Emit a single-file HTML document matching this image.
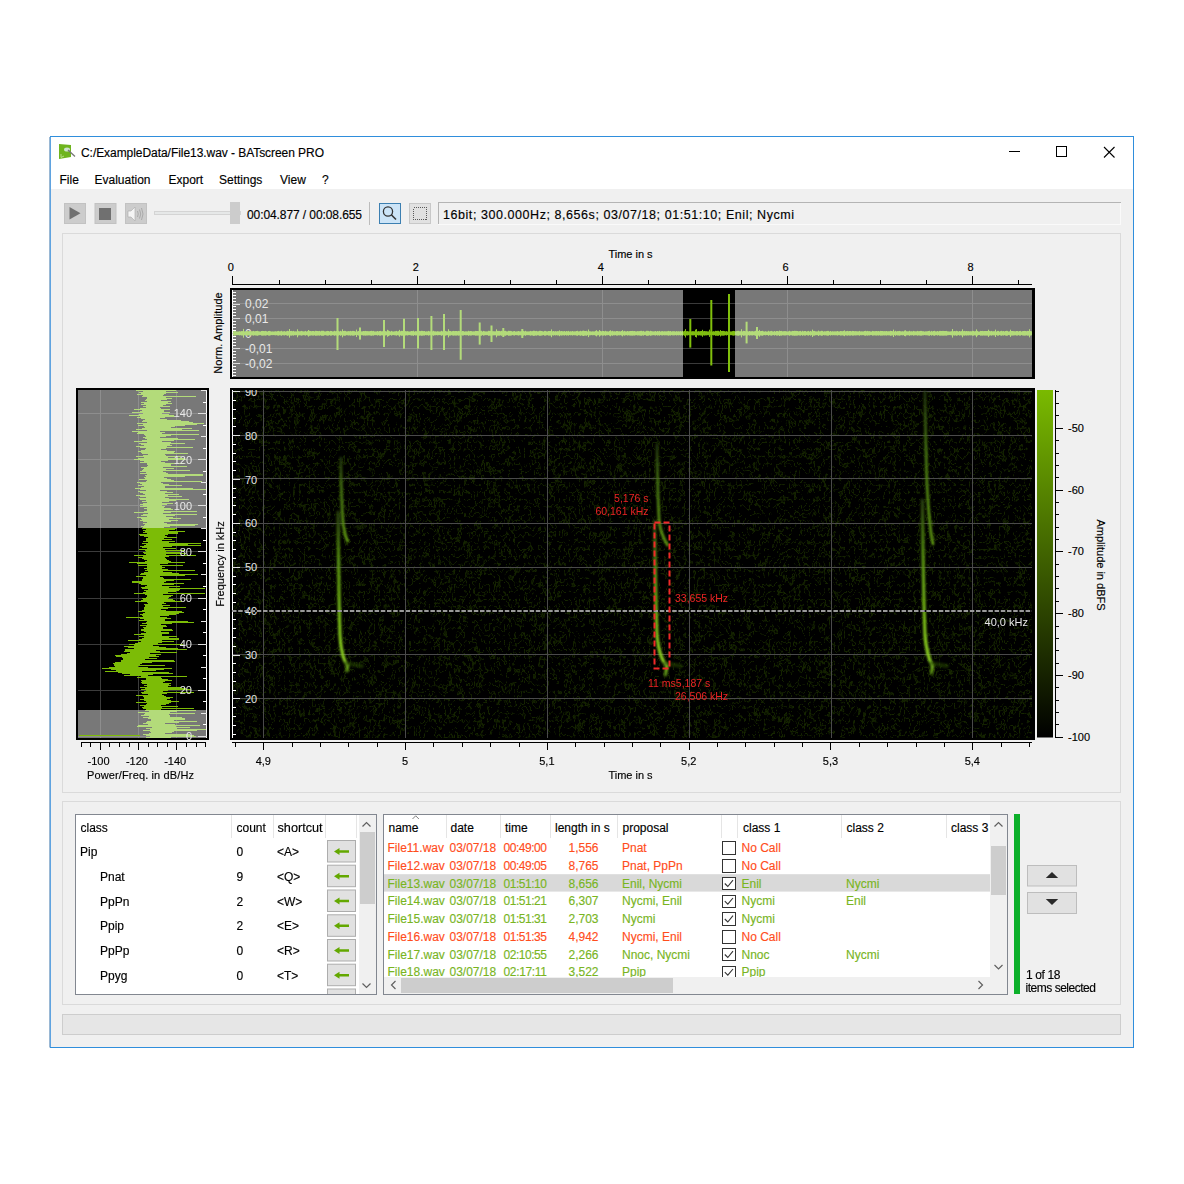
<!DOCTYPE html>
<html><head><meta charset="utf-8"><title>BATscreen PRO</title>
<style>html,body{margin:0;padding:0;background:#fff;width:1184px;height:1184px;overflow:hidden}svg{display:block}text{font-family:"Liberation Sans", sans-serif}</style>
</head><body><svg width="1184" height="1184" viewBox="0 0 1184 1184" font-family='"Liberation Sans", sans-serif'><defs>
<filter id="noise" x="0" y="0" width="100%" height="100%" color-interpolation-filters="sRGB">
<feTurbulence type="fractalNoise" baseFrequency="0.2 0.14" numOctaves="2" seed="5"/><feColorMatrix type="matrix" values="1 0 0 0 0  1 0 0 0 0  1 0 0 0 0  0 0 0 0 1"/>
<feComponentTransfer result="c"><feFuncR type="table" tableValues="0 0 0 0 0 0 0 0 0.09 0 0 0 0 0 0 0 0"/><feFuncG type="table" tableValues="0 0 0 0 0 0 0 0 0.155 0 0 0 0 0 0 0 0"/><feFuncB type="table" tableValues="0"/><feFuncA type="table" tableValues="1 1"/></feComponentTransfer>
<feTurbulence type="fractalNoise" baseFrequency="0.12" numOctaves="2" seed="11"/><feColorMatrix type="matrix" values="1 0 0 0 0  1 0 0 0 0  1 0 0 0 0  0 0 0 0 1"/>
<feComponentTransfer result="m"><feFuncR type="discrete" tableValues="0 0 0 0 1 1 1 1 1 1"/><feFuncG type="discrete" tableValues="0 0 0 0 1 1 1 1 1 1"/><feFuncB type="discrete" tableValues="0 0 0 0 1 1 1 1 1 1"/><feFuncA type="table" tableValues="1 1"/></feComponentTransfer>
<feComposite in="c" in2="m" operator="arithmetic" k1="1" k2="0" k3="0" k4="0"/>
</filter>
<filter id="soft" x="-50%" y="-10%" width="200%" height="120%"><feGaussianBlur stdDeviation="0.9"/></filter>
</defs><rect x="0" y="0" width="1184" height="1184" fill="#ffffff" />
<rect x="50" y="136" width="1084" height="912" fill="#2f8edc" />
<rect x="51" y="137" width="1082" height="910" fill="#f0f0f0" />
<line x1="49.5" y1="137" x2="49.5" y2="1047.5" stroke="#9ab8d4" stroke-width="1" />
<line x1="50.5" y1="137" x2="50.5" y2="1047" stroke="#5fa3e0" stroke-width="1" />
<rect x="51" y="137" width="1082" height="52" fill="#ffffff" />
<path d="M59 144 L71 145 L71 157 L59 159 Z" fill="#6fb41e"/>
<ellipse cx="67" cy="149.5" rx="3" ry="2" fill="#cfe3cf"/>
<line x1="68" y1="150" x2="75" y2="156.5" stroke="#777" stroke-width="1.3"/>
<path d="M61 154 L61 157.5 L64 156" stroke="#c8e6a0" stroke-width="0.8" fill="none"/>
<text x="81" y="157" font-size="12" fill="#000" stroke="#000" stroke-width="0.15" text-anchor="start" textLength="243">C:/ExampleData/File13.wav - BATscreen PRO</text>
<line x1="1009" y1="151.5" x2="1020" y2="151.5" stroke="#000" stroke-width="1" />
<rect x="1056.5" y="146.5" width="10" height="10" fill="none" stroke="#000" stroke-width="1" />
<line x1="1104" y1="147" x2="1114.5" y2="157.5" stroke="#000" stroke-width="1.1" />
<line x1="1114.5" y1="147" x2="1104" y2="157.5" stroke="#000" stroke-width="1.1" />
<text x="59.5" y="184" font-size="12" fill="#000" stroke="#000" stroke-width="0.15" text-anchor="start" >File</text>
<text x="94.5" y="184" font-size="12" fill="#000" stroke="#000" stroke-width="0.15" text-anchor="start" >Evaluation</text>
<text x="168.5" y="184" font-size="12" fill="#000" stroke="#000" stroke-width="0.15" text-anchor="start" >Export</text>
<text x="219" y="184" font-size="12" fill="#000" stroke="#000" stroke-width="0.15" text-anchor="start" >Settings</text>
<text x="280" y="184" font-size="12" fill="#000" stroke="#000" stroke-width="0.15" text-anchor="start" >View</text>
<text x="322" y="184" font-size="12" fill="#000" stroke="#000" stroke-width="0.15" text-anchor="start" >?</text>
<rect x="64.5" y="203.5" width="21" height="20" fill="#cccccc" stroke="#c2c2c2" stroke-width="1" />
<rect x="95.0" y="203.5" width="21" height="20" fill="#cccccc" stroke="#c2c2c2" stroke-width="1" />
<rect x="125.5" y="203.5" width="21" height="20" fill="#cccccc" stroke="#c2c2c2" stroke-width="1" />
<path d="M69.5 207 L80.5 213.2 L69.5 219.5 Z" fill="#707070"/>
<rect x="99" y="208" width="12" height="12" fill="#707070" />
<path d="M128 211 L131 211 L135 207 L135 221 L131 217 L128 217 Z" fill="#f4f4f4" stroke="#aaa" stroke-width="0.6"/>
<path d="M137.5 211 Q139 214 137.5 217 M139.5 209.5 Q142 214 139.5 218.5 M141.5 208 Q144.5 214 141.5 220" fill="none" stroke="#999" stroke-width="0.7"/>
<rect x="154.5" y="211.5" width="86" height="3" fill="#e6e8e8" stroke="#d4d4d4" stroke-width="1" />
<rect x="230" y="202" width="10" height="22" fill="#cccccc" />
<text x="247" y="219" font-size="12" fill="#000" stroke="#000" stroke-width="0.15" text-anchor="start" textLength="115">00:04.877 / 00:08.655</text>
<line x1="369.5" y1="202" x2="369.5" y2="225" stroke="#bcbcbc" stroke-width="1" />
<rect x="379.5" y="203.5" width="21" height="20" fill="#cce4f7" stroke="#3c7fb1" stroke-width="1" />
<circle cx="388" cy="211.5" r="4.6" fill="none" stroke="#333" stroke-width="1.3"/>
<line x1="391.3" y1="214.8" x2="396" y2="219.5" stroke="#333" stroke-width="1.6"/>
<rect x="409.5" y="203.5" width="21" height="20" fill="#e1e1e1" stroke="#c8c8c8" stroke-width="1" />
<rect x="413.5" y="207.5" width="13" height="12" fill="none" stroke="#5a5a5a" stroke-width="1" stroke-dasharray="1 1" shape-rendering="crispEdges"/>
<rect x="438" y="202" width="683" height="23" fill="#f0f0f0" />
<line x1="438" y1="202.5" x2="1121" y2="202.5" stroke="#b4b4b4" stroke-width="1" />
<line x1="438.5" y1="202" x2="438.5" y2="225" stroke="#b4b4b4" stroke-width="1" />
<line x1="438" y1="224.5" x2="1121" y2="224.5" stroke="#fafafa" stroke-width="1" />
<line x1="1120.5" y1="203" x2="1120.5" y2="225" stroke="#fafafa" stroke-width="1" />
<text x="443" y="219" font-size="12.5" fill="#000" stroke="#000" stroke-width="0.15" text-anchor="start" textLength="351">16bit; 300.000Hz; 8,656s; 03/07/18; 01:51:10; Enil; Nycmi</text>
<rect x="62.5" y="233.5" width="1058" height="559" fill="none" stroke="#dadada" stroke-width="1" />
<g shape-rendering="crispEdges">
<line x1="232" y1="284.5" x2="1032" y2="284.5" stroke="#000" stroke-width="1" />
<line x1="232.5" y1="276" x2="232.5" y2="285" stroke="#000" stroke-width="1" />
<line x1="279.5" y1="280" x2="279.5" y2="285" stroke="#000" stroke-width="1" />
<line x1="325.5" y1="280" x2="325.5" y2="285" stroke="#000" stroke-width="1" />
<line x1="371.5" y1="280" x2="371.5" y2="285" stroke="#000" stroke-width="1" />
<line x1="417.5" y1="276" x2="417.5" y2="285" stroke="#000" stroke-width="1" />
<line x1="464.5" y1="280" x2="464.5" y2="285" stroke="#000" stroke-width="1" />
<line x1="510.5" y1="280" x2="510.5" y2="285" stroke="#000" stroke-width="1" />
<line x1="556.5" y1="280" x2="556.5" y2="285" stroke="#000" stroke-width="1" />
<line x1="602.5" y1="276" x2="602.5" y2="285" stroke="#000" stroke-width="1" />
<line x1="648.5" y1="280" x2="648.5" y2="285" stroke="#000" stroke-width="1" />
<line x1="695.5" y1="280" x2="695.5" y2="285" stroke="#000" stroke-width="1" />
<line x1="741.5" y1="280" x2="741.5" y2="285" stroke="#000" stroke-width="1" />
<line x1="787.5" y1="276" x2="787.5" y2="285" stroke="#000" stroke-width="1" />
<line x1="833.5" y1="280" x2="833.5" y2="285" stroke="#000" stroke-width="1" />
<line x1="880.5" y1="280" x2="880.5" y2="285" stroke="#000" stroke-width="1" />
<line x1="926.5" y1="280" x2="926.5" y2="285" stroke="#000" stroke-width="1" />
<line x1="972.5" y1="276" x2="972.5" y2="285" stroke="#000" stroke-width="1" />
<line x1="1018.5" y1="280" x2="1018.5" y2="285" stroke="#000" stroke-width="1" />
</g>
<text x="230.9" y="271" font-size="11" fill="#000" stroke="#000" stroke-width="0.15" text-anchor="middle" >0</text>
<text x="415.8" y="271" font-size="11" fill="#000" stroke="#000" stroke-width="0.15" text-anchor="middle" >2</text>
<text x="600.7" y="271" font-size="11" fill="#000" stroke="#000" stroke-width="0.15" text-anchor="middle" >4</text>
<text x="785.6" y="271" font-size="11" fill="#000" stroke="#000" stroke-width="0.15" text-anchor="middle" >6</text>
<text x="970.5" y="271" font-size="11" fill="#000" stroke="#000" stroke-width="0.15" text-anchor="middle" >8</text>
<text x="630.5" y="257.5" font-size="11" fill="#000" stroke="#000" stroke-width="0.15" text-anchor="middle" >Time in s</text>
<text transform="translate(221.5,333) rotate(-90)" x="0" y="0" font-size="11" stroke="#000" stroke-width="0.15" text-anchor="middle">Norm. Amplitude</text>
<rect x="230" y="288" width="805" height="91" fill="#000" />
<rect x="232" y="290" width="800" height="87" fill="#787878" />
<rect x="683" y="290" width="52" height="87" fill="#000" />
<g shape-rendering="crispEdges">
<line x1="232" y1="303.5" x2="683" y2="303.5" stroke="#8e8e8e" stroke-width="1" />
<line x1="683" y1="303.5" x2="735" y2="303.5" stroke="#3a3a3a" stroke-width="1" />
<line x1="735" y1="303.5" x2="1032" y2="303.5" stroke="#8e8e8e" stroke-width="1" />
<line x1="232" y1="318.5" x2="683" y2="318.5" stroke="#8e8e8e" stroke-width="1" />
<line x1="683" y1="318.5" x2="735" y2="318.5" stroke="#3a3a3a" stroke-width="1" />
<line x1="735" y1="318.5" x2="1032" y2="318.5" stroke="#8e8e8e" stroke-width="1" />
<line x1="232" y1="333.5" x2="683" y2="333.5" stroke="#8e8e8e" stroke-width="1" />
<line x1="683" y1="333.5" x2="735" y2="333.5" stroke="#3a3a3a" stroke-width="1" />
<line x1="735" y1="333.5" x2="1032" y2="333.5" stroke="#8e8e8e" stroke-width="1" />
<line x1="232" y1="348.5" x2="683" y2="348.5" stroke="#8e8e8e" stroke-width="1" />
<line x1="683" y1="348.5" x2="735" y2="348.5" stroke="#3a3a3a" stroke-width="1" />
<line x1="735" y1="348.5" x2="1032" y2="348.5" stroke="#8e8e8e" stroke-width="1" />
<line x1="232" y1="363.5" x2="683" y2="363.5" stroke="#8e8e8e" stroke-width="1" />
<line x1="683" y1="363.5" x2="735" y2="363.5" stroke="#3a3a3a" stroke-width="1" />
<line x1="735" y1="363.5" x2="1032" y2="363.5" stroke="#8e8e8e" stroke-width="1" />
<line x1="417.5" y1="290" x2="417.5" y2="377" stroke="#8e8e8e" stroke-width="1" />
<line x1="602.5" y1="290" x2="602.5" y2="377" stroke="#8e8e8e" stroke-width="1" />
<line x1="787.5" y1="290" x2="787.5" y2="377" stroke="#8e8e8e" stroke-width="1" />
<line x1="972.5" y1="290" x2="972.5" y2="377" stroke="#8e8e8e" stroke-width="1" />
<line x1="232.5" y1="290" x2="232.5" y2="377" stroke="#ffffff" stroke-width="1" />
<line x1="232" y1="375.5" x2="236" y2="375.5" stroke="#ffffff" stroke-width="1" />
<line x1="232" y1="372.5" x2="236" y2="372.5" stroke="#ffffff" stroke-width="1" />
<line x1="232" y1="369.5" x2="236" y2="369.5" stroke="#ffffff" stroke-width="1" />
<line x1="232" y1="366.5" x2="236" y2="366.5" stroke="#ffffff" stroke-width="1" />
<line x1="232" y1="363.5" x2="240" y2="363.5" stroke="#dcdcdc" stroke-width="1" />
<line x1="232" y1="360.5" x2="236" y2="360.5" stroke="#ffffff" stroke-width="1" />
<line x1="232" y1="357.5" x2="236" y2="357.5" stroke="#ffffff" stroke-width="1" />
<line x1="232" y1="354.5" x2="236" y2="354.5" stroke="#ffffff" stroke-width="1" />
<line x1="232" y1="351.5" x2="236" y2="351.5" stroke="#ffffff" stroke-width="1" />
<line x1="232" y1="348.5" x2="240" y2="348.5" stroke="#dcdcdc" stroke-width="1" />
<line x1="232" y1="345.5" x2="236" y2="345.5" stroke="#ffffff" stroke-width="1" />
<line x1="232" y1="342.5" x2="236" y2="342.5" stroke="#ffffff" stroke-width="1" />
<line x1="232" y1="339.5" x2="236" y2="339.5" stroke="#ffffff" stroke-width="1" />
<line x1="232" y1="336.5" x2="236" y2="336.5" stroke="#ffffff" stroke-width="1" />
<line x1="232" y1="333.5" x2="240" y2="333.5" stroke="#dcdcdc" stroke-width="1" />
<line x1="232" y1="330.5" x2="236" y2="330.5" stroke="#ffffff" stroke-width="1" />
<line x1="232" y1="327.5" x2="236" y2="327.5" stroke="#ffffff" stroke-width="1" />
<line x1="232" y1="324.5" x2="236" y2="324.5" stroke="#ffffff" stroke-width="1" />
<line x1="232" y1="321.5" x2="236" y2="321.5" stroke="#ffffff" stroke-width="1" />
<line x1="232" y1="318.5" x2="240" y2="318.5" stroke="#dcdcdc" stroke-width="1" />
<line x1="232" y1="315.5" x2="236" y2="315.5" stroke="#ffffff" stroke-width="1" />
<line x1="232" y1="312.5" x2="236" y2="312.5" stroke="#ffffff" stroke-width="1" />
<line x1="232" y1="309.5" x2="236" y2="309.5" stroke="#ffffff" stroke-width="1" />
<line x1="232" y1="306.5" x2="236" y2="306.5" stroke="#ffffff" stroke-width="1" />
<line x1="232" y1="304.5" x2="240" y2="304.5" stroke="#dcdcdc" stroke-width="1" />
<line x1="232" y1="301.5" x2="236" y2="301.5" stroke="#ffffff" stroke-width="1" />
<line x1="232" y1="298.5" x2="236" y2="298.5" stroke="#ffffff" stroke-width="1" />
<line x1="232" y1="295.5" x2="236" y2="295.5" stroke="#ffffff" stroke-width="1" />
<line x1="232" y1="292.5" x2="236" y2="292.5" stroke="#ffffff" stroke-width="1" />
</g>
<text x="245" y="307.8" font-size="12" fill="#e8e8e8" text-anchor="start" >0,02</text>
<text x="245" y="322.8" font-size="12" fill="#e8e8e8" text-anchor="start" >0,01</text>
<text x="245" y="337.8" font-size="12" fill="#e8e8e8" text-anchor="start" >0</text>
<text x="245" y="352.8" font-size="12" fill="#e8e8e8" text-anchor="start" >-0,01</text>
<text x="245" y="367.8" font-size="12" fill="#e8e8e8" text-anchor="start" >-0,02</text>
<path d="M233.5 331.3V335.3M234.5 331.0V335.6M235.5 331.1V335.5M236.5 331.5V335.1M237.5 331.5V335.1M238.5 331.5V335.1M239.5 331.2V335.4M240.5 331.4V335.2M241.5 331.1V335.5M242.5 331.1V335.5M243.5 328.9V337.7M244.5 331.3V335.3M245.5 331.4V335.2M246.5 330.9V335.7M247.5 331.1V335.5M248.5 331.2V335.4M249.5 331.0V335.6M250.5 331.0V335.6M251.5 331.3V335.3M252.5 331.2V335.4M253.5 330.9V335.7M254.5 331.3V335.3M255.5 331.1V335.5M256.5 331.0V335.6M257.5 330.8V335.8M258.5 331.2V335.4M259.5 331.4V335.2M260.5 331.5V335.1M261.5 331.0V335.6M262.5 330.9V335.7M263.5 331.0V335.6M264.5 331.1V335.5M265.5 330.9V335.7M266.5 331.2V335.4M267.5 331.5V335.1M268.5 331.0V335.6M269.5 330.9V335.7M270.5 331.2V335.4M271.5 331.5V335.1M272.5 331.4V335.2M273.5 331.5V335.1M274.5 331.4V335.2M275.5 331.2V335.4M276.5 331.4V335.2M277.5 331.1V335.5M278.5 330.9V335.7M279.5 331.3V335.3M280.5 331.2V335.4M281.5 330.8V335.8M282.5 331.4V335.2M283.5 331.3V335.3M284.5 331.1V335.5M285.5 331.5V335.1M286.5 331.2V335.4M287.5 330.8V335.8M288.5 331.1V335.5M289.5 329.0V337.6M290.5 331.0V335.6M291.5 330.9V335.7M292.5 331.2V335.4M293.5 330.9V335.7M294.5 331.4V335.2M295.5 331.3V335.3M296.5 331.4V335.2M297.5 329.3V337.3M298.5 331.1V335.5M299.5 331.3V335.3M300.5 331.2V335.4M301.5 330.9V335.7M302.5 331.2V335.4M303.5 331.4V335.2M304.5 331.3V335.3M305.5 330.9V335.7M306.5 331.5V335.1M307.5 331.1V335.5M308.5 330.0V336.6M309.5 330.8V335.8M310.5 331.0V335.6M311.5 331.2V335.4M312.5 331.0V335.6M313.5 331.0V335.6M314.5 331.3V335.3M315.5 330.8V335.8M316.5 330.9V335.7M317.5 331.0V335.6M318.5 331.1V335.5M319.5 330.9V335.7M320.5 331.3V335.3M321.5 330.8V335.8M322.5 330.8V335.8M323.5 330.8V335.8M324.5 331.3V335.3M325.5 331.4V335.2M326.5 331.1V335.5M327.5 330.9V335.7M328.5 331.0V335.6M329.5 331.4V335.2M330.5 330.9V335.7M331.5 331.0V335.6M332.5 331.4V335.2M333.5 331.3V335.3M334.5 330.8V335.8M335.5 331.2V335.4M336.5 331.0V335.6M337.5 331.4V335.2M338.5 330.9V335.7M339.5 331.4V335.2M340.5 330.8V335.8M341.5 331.3V335.3M342.5 329.3V337.3M343.5 331.0V335.6M344.5 330.8V335.8M345.5 330.9V335.7M346.5 331.4V335.2M347.5 331.3V335.3M348.5 331.1V335.5M349.5 331.2V335.4M350.5 330.9V335.7M351.5 331.2V335.4M352.5 330.9V335.7M353.5 330.9V335.7M354.5 331.1V335.5M355.5 331.5V335.1M356.5 329.6V337.0M357.5 331.4V335.2M358.5 331.0V335.6M359.5 331.3V335.3M360.5 331.1V335.5M361.5 331.4V335.2M362.5 331.3V335.3M363.5 331.0V335.6M364.5 331.1V335.5M365.5 330.9V335.7M366.5 331.1V335.5M367.5 331.1V335.5M368.5 331.2V335.4M369.5 331.2V335.4M370.5 331.0V335.6M371.5 330.8V335.8M372.5 331.1V335.5M373.5 330.9V335.7M374.5 331.4V335.2M375.5 331.4V335.2M376.5 331.4V335.2M377.5 331.0V335.6M378.5 331.4V335.2M379.5 331.0V335.6M380.5 330.9V335.7M381.5 331.3V335.3M382.5 331.2V335.4M383.5 330.8V335.8M384.5 331.4V335.2M385.5 331.1V335.5M386.5 331.4V335.2M387.5 329.8V336.8M388.5 330.5V336.1M389.5 331.1V335.5M390.5 331.5V335.1M391.5 330.9V335.7M392.5 331.4V335.2M393.5 331.5V335.1M394.5 331.3V335.3M395.5 331.2V335.4M396.5 330.9V335.7M397.5 331.4V335.2M398.5 331.1V335.5M399.5 329.9V336.7M400.5 331.2V335.4M401.5 330.8V335.8M402.5 330.9V335.7M403.5 329.0V337.6M404.5 331.2V335.4M405.5 331.1V335.5M406.5 331.3V335.3M407.5 331.1V335.5M408.5 331.4V335.2M409.5 331.5V335.1M410.5 331.3V335.3M411.5 331.0V335.6M412.5 331.1V335.5M413.5 330.7V335.9M414.5 331.5V335.1M415.5 331.1V335.5M416.5 331.2V335.4M417.5 331.4V335.2M418.5 331.2V335.4M419.5 330.9V335.7M420.5 331.1V335.5M421.5 330.8V335.8M422.5 330.9V335.7M423.5 331.1V335.5M424.5 331.0V335.6M425.5 331.5V335.1M426.5 331.3V335.3M427.5 331.4V335.2M428.5 330.9V335.7M429.5 331.3V335.3M430.5 331.3V335.3M431.5 331.4V335.2M432.5 331.3V335.3M433.5 330.8V335.8M434.5 331.3V335.3M435.5 331.3V335.3M436.5 331.5V335.1M437.5 331.2V335.4M438.5 331.4V335.2M439.5 331.5V335.1M440.5 331.4V335.2M441.5 330.8V335.8M442.5 331.3V335.3M443.5 331.1V335.5M444.5 331.0V335.6M445.5 330.9V335.7M446.5 331.3V335.3M447.5 331.4V335.2M448.5 329.2V337.4M449.5 330.9V335.7M450.5 331.0V335.6M451.5 331.4V335.2M452.5 331.1V335.5M453.5 330.9V335.7M454.5 331.1V335.5M455.5 331.0V335.6M456.5 331.0V335.6M457.5 331.2V335.4M458.5 330.9V335.7M459.5 331.1V335.5M460.5 331.0V335.6M461.5 331.5V335.1M462.5 331.0V335.6M463.5 331.1V335.5M464.5 331.5V335.1M465.5 331.3V335.3M466.5 331.3V335.3M467.5 331.4V335.2M468.5 330.8V335.8M469.5 331.2V335.4M470.5 331.0V335.6M471.5 331.1V335.5M472.5 331.4V335.2M473.5 331.3V335.3M474.5 331.3V335.3M475.5 330.9V335.7M476.5 331.0V335.6M477.5 331.0V335.6M478.5 331.1V335.5M479.5 331.2V335.4M480.5 330.9V335.7M481.5 330.8V335.8M482.5 331.5V335.1M483.5 330.9V335.7M484.5 331.2V335.4M485.5 331.4V335.2M486.5 331.4V335.2M487.5 331.4V335.2M488.5 330.8V335.8M489.5 330.9V335.7M490.5 330.9V335.7M491.5 331.3V335.3M492.5 331.2V335.4M493.5 331.2V335.4M494.5 331.3V335.3M495.5 331.3V335.3M496.5 329.3V337.3M497.5 330.9V335.7M498.5 330.9V335.7M499.5 330.9V335.7M500.5 331.2V335.4M501.5 330.8V335.8M502.5 331.2V335.4M503.5 331.1V335.5M504.5 330.9V335.7M505.5 330.8V335.8M506.5 331.3V335.3M507.5 331.4V335.2M508.5 330.8V335.8M509.5 330.9V335.7M510.5 330.9V335.7M511.5 331.1V335.5M512.5 331.5V335.1M513.5 331.2V335.4M514.5 331.0V335.6M515.5 331.5V335.1M516.5 331.4V335.2M517.5 331.3V335.3M518.5 331.0V335.6M519.5 331.3V335.3M520.5 331.3V335.3M521.5 331.2V335.4M522.5 331.4V335.2M523.5 330.9V335.7M524.5 331.3V335.3M525.5 330.8V335.8M526.5 331.4V335.2M527.5 331.4V335.2M528.5 331.4V335.2M529.5 331.3V335.3M530.5 330.9V335.7M531.5 331.2V335.4M532.5 331.1V335.5M533.5 330.7V335.9M534.5 330.8V335.8M535.5 331.1V335.5M536.5 330.9V335.7M537.5 331.3V335.3M538.5 331.2V335.4M539.5 330.8V335.8M540.5 330.8V335.8M541.5 331.0V335.6M542.5 331.2V335.4M543.5 331.5V335.1M544.5 330.9V335.7M545.5 330.9V335.7M546.5 331.3V335.3M547.5 331.4V335.2M548.5 331.0V335.6M549.5 331.0V335.6M550.5 331.0V335.6M551.5 329.4V337.2M552.5 331.3V335.3M553.5 331.0V335.6M554.5 331.4V335.2M555.5 331.1V335.5M556.5 331.4V335.2M557.5 331.1V335.5M558.5 331.2V335.4M559.5 330.4V336.2M560.5 331.2V335.4M561.5 331.0V335.6M562.5 331.2V335.4M563.5 331.3V335.3M564.5 331.0V335.6M565.5 331.5V335.1M566.5 331.0V335.6M567.5 331.3V335.3M568.5 330.9V335.7M569.5 331.5V335.1M570.5 331.2V335.4M571.5 331.4V335.2M572.5 331.0V335.6M573.5 331.4V335.2M574.5 331.3V335.3M575.5 331.3V335.3M576.5 331.0V335.6M577.5 330.8V335.8M578.5 331.4V335.2M579.5 331.2V335.4M580.5 330.8V335.8M581.5 331.2V335.4M582.5 330.8V335.8M583.5 330.6V336.0M584.5 330.9V335.7M585.5 331.0V335.6M586.5 330.8V335.8M587.5 331.4V335.2M588.5 329.5V337.1M589.5 331.2V335.4M590.5 331.3V335.3M591.5 331.5V335.1M592.5 331.3V335.3M593.5 331.4V335.2M594.5 331.4V335.2M595.5 330.9V335.7M596.5 330.2V336.4M597.5 331.2V335.4M598.5 331.4V335.2M599.5 330.0V336.6M600.5 330.9V335.7M601.5 331.3V335.3M602.5 330.9V335.7M603.5 331.0V335.6M604.5 331.3V335.3M605.5 330.8V335.8M606.5 331.3V335.3M607.5 331.3V335.3M608.5 331.5V335.1M609.5 330.9V335.7M610.5 330.3V336.3M611.5 331.2V335.4M612.5 330.8V335.8M613.5 331.3V335.3M614.5 331.2V335.4M615.5 331.4V335.2M616.5 331.0V335.6M617.5 331.0V335.6M618.5 331.3V335.3M619.5 331.2V335.4M620.5 331.4V335.2M621.5 331.0V335.6M622.5 330.2V336.4M623.5 331.3V335.3M624.5 330.9V335.7M625.5 331.3V335.3M626.5 331.4V335.2M627.5 331.0V335.6M628.5 331.3V335.3M629.5 331.1V335.5M630.5 331.0V335.6M631.5 331.0V335.6M632.5 330.9V335.7M633.5 331.1V335.5M634.5 331.0V335.6M635.5 331.3V335.3M636.5 331.4V335.2M637.5 331.1V335.5M638.5 331.2V335.4M639.5 331.1V335.5M640.5 330.9V335.7M641.5 330.8V335.8M642.5 331.2V335.4M643.5 330.9V335.7M644.5 331.5V335.1M645.5 331.4V335.2M646.5 330.8V335.8M647.5 330.8V335.8M648.5 330.9V335.7M649.5 331.3V335.3M650.5 330.8V335.8M651.5 331.1V335.5M652.5 331.3V335.3M653.5 331.4V335.2M654.5 331.3V335.3M655.5 331.0V335.6M656.5 331.5V335.1M657.5 331.0V335.6M658.5 331.3V335.3M659.5 330.9V335.7M660.5 331.5V335.1M661.5 331.2V335.4M662.5 331.1V335.5M663.5 331.4V335.2M664.5 331.2V335.4M665.5 331.3V335.3M666.5 331.3V335.3M667.5 331.2V335.4M668.5 330.9V335.7M669.5 331.2V335.4M670.5 331.0V335.6M671.5 331.5V335.1M672.5 331.2V335.4M673.5 331.2V335.4M674.5 331.2V335.4M675.5 331.5V335.1M676.5 331.1V335.5M677.5 331.4V335.2M678.5 331.2V335.4M679.5 331.4V335.2M680.5 331.1V335.5M681.5 331.4V335.2M682.5 330.9V335.7M735.5 331.4V335.2M736.5 331.1V335.5M737.5 330.9V335.7M738.5 330.8V335.8M739.5 331.2V335.4M740.5 331.2V335.4M741.5 329.2V337.4M742.5 331.3V335.3M743.5 330.8V335.8M744.5 331.0V335.6M745.5 331.2V335.4M746.5 331.1V335.5M747.5 331.1V335.5M748.5 331.4V335.2M749.5 331.0V335.6M750.5 331.3V335.3M751.5 331.2V335.4M752.5 331.1V335.5M753.5 331.4V335.2M754.5 331.2V335.4M755.5 330.8V335.8M756.5 331.4V335.2M757.5 331.1V335.5M758.5 331.0V335.6M759.5 329.9V336.7M760.5 331.1V335.5M761.5 331.0V335.6M762.5 330.8V335.8M763.5 331.3V335.3M764.5 331.5V335.1M765.5 331.2V335.4M766.5 331.5V335.1M767.5 331.5V335.1M768.5 330.8V335.8M769.5 331.4V335.2M770.5 331.1V335.5M771.5 330.9V335.7M772.5 331.3V335.3M773.5 331.5V335.1M774.5 331.0V335.6M775.5 331.5V335.1M776.5 331.0V335.6M777.5 331.0V335.6M778.5 331.3V335.3M779.5 330.6V336.0M780.5 331.0V335.6M781.5 330.9V335.7M782.5 331.3V335.3M783.5 331.2V335.4M784.5 331.1V335.5M785.5 331.1V335.5M786.5 331.3V335.3M787.5 331.5V335.1M788.5 331.3V335.3M789.5 330.8V335.8M790.5 331.3V335.3M791.5 331.3V335.3M792.5 330.9V335.7M793.5 331.0V335.6M794.5 330.8V335.8M795.5 330.9V335.7M796.5 330.9V335.7M797.5 331.0V335.6M798.5 331.3V335.3M799.5 331.1V335.5M800.5 330.9V335.7M801.5 331.5V335.1M802.5 330.8V335.8M803.5 331.3V335.3M804.5 331.0V335.6M805.5 331.0V335.6M806.5 331.5V335.1M807.5 331.2V335.4M808.5 330.9V335.7M809.5 331.5V335.1M810.5 330.9V335.7M811.5 331.4V335.2M812.5 329.6V337.0M813.5 330.9V335.7M814.5 330.9V335.7M815.5 331.3V335.3M816.5 331.4V335.2M817.5 331.4V335.2M818.5 330.6V336.0M819.5 331.3V335.3M820.5 331.2V335.4M821.5 330.8V335.8M822.5 330.9V335.7M823.5 331.5V335.1M824.5 331.2V335.4M825.5 331.3V335.3M826.5 331.1V335.5M827.5 330.9V335.7M828.5 330.9V335.7M829.5 331.5V335.1M830.5 331.0V335.6M831.5 331.5V335.1M832.5 331.2V335.4M833.5 331.4V335.2M834.5 331.3V335.3M835.5 331.3V335.3M836.5 331.3V335.3M837.5 331.0V335.6M838.5 331.4V335.2M839.5 331.4V335.2M840.5 331.0V335.6M841.5 331.1V335.5M842.5 331.2V335.4M843.5 330.9V335.7M844.5 330.4V336.2M845.5 331.3V335.3M846.5 331.1V335.5M847.5 330.9V335.7M848.5 331.2V335.4M849.5 331.0V335.6M850.5 331.0V335.6M851.5 331.3V335.3M852.5 330.9V335.7M853.5 331.0V335.6M854.5 331.2V335.4M855.5 331.1V335.5M856.5 331.2V335.4M857.5 331.3V335.3M858.5 331.3V335.3M859.5 330.9V335.7M860.5 331.4V335.2M861.5 331.3V335.3M862.5 331.4V335.2M863.5 331.4V335.2M864.5 331.0V335.6M865.5 330.8V335.8M866.5 331.2V335.4M867.5 330.9V335.7M868.5 331.2V335.4M869.5 331.1V335.5M870.5 331.4V335.2M871.5 331.5V335.1M872.5 330.9V335.7M873.5 331.1V335.5M874.5 331.2V335.4M875.5 331.1V335.5M876.5 331.0V335.6M877.5 331.2V335.4M878.5 331.0V335.6M879.5 331.3V335.3M880.5 330.9V335.7M881.5 331.0V335.6M882.5 331.0V335.6M883.5 331.2V335.4M884.5 331.1V335.5M885.5 331.2V335.4M886.5 331.0V335.6M887.5 331.3V335.3M888.5 331.2V335.4M889.5 331.2V335.4M890.5 330.8V335.8M891.5 331.0V335.6M892.5 331.2V335.4M893.5 329.6V337.0M894.5 331.4V335.2M895.5 330.8V335.8M896.5 331.4V335.2M897.5 331.1V335.5M898.5 331.1V335.5M899.5 330.9V335.7M900.5 331.2V335.4M901.5 331.4V335.2M902.5 331.2V335.4M903.5 331.4V335.2M904.5 330.6V336.0M905.5 330.3V336.3M906.5 331.2V335.4M907.5 331.3V335.3M908.5 331.3V335.3M909.5 330.8V335.8M910.5 331.3V335.3M911.5 331.2V335.4M912.5 331.4V335.2M913.5 330.9V335.7M914.5 331.2V335.4M915.5 331.3V335.3M916.5 331.3V335.3M917.5 330.9V335.7M918.5 331.2V335.4M919.5 331.1V335.5M920.5 330.9V335.7M921.5 330.9V335.7M922.5 331.2V335.4M923.5 331.2V335.4M924.5 331.5V335.1M925.5 331.3V335.3M926.5 331.3V335.3M927.5 331.2V335.4M928.5 331.0V335.6M929.5 330.8V335.8M930.5 331.5V335.1M931.5 330.9V335.7M932.5 331.4V335.2M933.5 331.0V335.6M934.5 330.8V335.8M935.5 331.3V335.3M936.5 331.4V335.2M937.5 331.0V335.6M938.5 331.4V335.2M939.5 330.9V335.7M940.5 330.9V335.7M941.5 331.0V335.6M942.5 330.9V335.7M943.5 330.9V335.7M944.5 331.0V335.6M945.5 331.0V335.6M946.5 330.9V335.7M947.5 331.3V335.3M948.5 331.4V335.2M949.5 331.5V335.1M950.5 331.4V335.2M951.5 331.2V335.4M952.5 329.0V337.6M953.5 331.2V335.4M954.5 331.0V335.6M955.5 331.2V335.4M956.5 330.8V335.8M957.5 331.1V335.5M958.5 331.5V335.1M959.5 331.0V335.6M960.5 331.3V335.3M961.5 331.1V335.5M962.5 329.3V337.3M963.5 331.1V335.5M964.5 330.9V335.7M965.5 331.2V335.4M966.5 331.0V335.6M967.5 331.2V335.4M968.5 331.1V335.5M969.5 331.3V335.3M970.5 331.2V335.4M971.5 331.3V335.3M972.5 330.8V335.8M973.5 330.9V335.7M974.5 331.3V335.3M975.5 331.1V335.5M976.5 329.4V337.2M977.5 330.9V335.7M978.5 331.5V335.1M979.5 331.5V335.1M980.5 330.9V335.7M981.5 331.0V335.6M982.5 330.9V335.7M983.5 331.1V335.5M984.5 331.0V335.6M985.5 331.0V335.6M986.5 331.0V335.6M987.5 331.0V335.6M988.5 329.7V336.9M989.5 330.9V335.7M990.5 331.2V335.4M991.5 330.9V335.7M992.5 331.3V335.3M993.5 331.2V335.4M994.5 331.2V335.4M995.5 329.6V337.0M996.5 331.5V335.1M997.5 330.9V335.7M998.5 330.9V335.7M999.5 331.5V335.1M1000.5 331.1V335.5M1001.5 330.8V335.8M1002.5 331.2V335.4M1003.5 331.0V335.6M1004.5 331.4V335.2M1005.5 331.0V335.6M1006.5 330.8V335.8M1007.5 330.9V335.7M1008.5 331.5V335.1M1009.5 331.3V335.3M1010.5 329.7V336.9M1011.5 331.0V335.6M1012.5 331.0V335.6M1013.5 331.1V335.5M1014.5 331.2V335.4M1015.5 331.3V335.3M1016.5 331.0V335.6M1017.5 331.0V335.6M1018.5 331.4V335.2M1019.5 331.0V335.6M1020.5 330.9V335.7M1021.5 331.5V335.1M1022.5 331.1V335.5M1023.5 331.0V335.6M1024.5 330.9V335.7M1025.5 331.0V335.6M1026.5 331.2V335.4M1027.5 330.9V335.7M1028.5 331.0V335.6M1029.5 329.2V337.4M1030.5 331.0V335.6M1031.5 331.3V335.3" stroke="#b3db7a" stroke-width="1" fill="none"/>
<path d="M683.5 331.4V335.2M684.5 330.8V335.8M685.5 329.1V337.5M686.5 331.2V335.4M687.5 331.1V335.5M688.5 331.4V335.2M689.5 331.3V335.3M690.5 330.9V335.7M691.5 331.4V335.2M692.5 331.2V335.4M693.5 331.2V335.4M694.5 331.3V335.3M695.5 329.6V337.0M696.5 329.1V337.5M697.5 331.4V335.2M698.5 331.1V335.5M699.5 331.3V335.3M700.5 331.1V335.5M701.5 331.0V335.6M702.5 329.8V336.8M703.5 331.2V335.4M704.5 331.0V335.6M705.5 331.2V335.4M706.5 331.2V335.4M707.5 331.4V335.2M708.5 331.4V335.2M709.5 329.7V336.9M710.5 331.4V335.2M711.5 331.0V335.6M712.5 331.5V335.1M713.5 331.2V335.4M714.5 331.4V335.2M715.5 330.8V335.8M716.5 330.9V335.7M717.5 330.8V335.8M718.5 330.8V335.8M719.5 331.4V335.2M720.5 330.1V336.5M721.5 331.0V335.6M722.5 330.9V335.7M723.5 330.9V335.7M724.5 331.1V335.5M725.5 331.4V335.2M726.5 331.1V335.5M727.5 331.5V335.1M728.5 331.4V335.2M729.5 331.0V335.6M730.5 331.4V335.2M731.5 331.4V335.2M732.5 331.1V335.5M733.5 330.9V335.7M734.5 331.1V335.5" stroke="#7fbd10" stroke-width="1" fill="none"/>
<rect x="336.5" y="318" width="2" height="32" fill="#b3db7a"/>
<rect x="359" y="327.5" width="2" height="12.100000000000023" fill="#b3db7a"/>
<rect x="383" y="320" width="2" height="27" fill="#b3db7a"/>
<rect x="403" y="318.7" width="2" height="30.0" fill="#b3db7a"/>
<rect x="417" y="318" width="2" height="30.5" fill="#b3db7a"/>
<rect x="430.4" y="316" width="2" height="34" fill="#b3db7a"/>
<rect x="443" y="314" width="2" height="36" fill="#b3db7a"/>
<rect x="459.7" y="310" width="2" height="49.80000000000001" fill="#b3db7a"/>
<rect x="478.7" y="322.5" width="2" height="22.100000000000023" fill="#b3db7a"/>
<rect x="490.5" y="325.5" width="2" height="16.5" fill="#b3db7a"/>
<rect x="502.3" y="328" width="2" height="9" fill="#b3db7a"/>
<rect x="521.3" y="329" width="2" height="9" fill="#b3db7a"/>
<rect x="689.3" y="319" width="2" height="28.600000000000023" fill="#80bf0c"/>
<rect x="710.3" y="300" width="2" height="65.5" fill="#80bf0c"/>
<rect x="728" y="294" width="2" height="78" fill="#80bf0c"/>
<rect x="745.6" y="321.7" width="2" height="21.69999999999999" fill="#b3db7a"/>
<rect x="756" y="327" width="2" height="12" fill="#b3db7a"/>
<rect x="230" y="388" width="805" height="352" fill="#000" />
<rect x="232" y="390" width="800" height="348" fill="#000"/>
<rect x="232" y="390" width="800" height="348" filter="url(#noise)"/>
<g shape-rendering="crispEdges">
<line x1="232" y1="391.5" x2="1032" y2="391.5" stroke="#4a4a4a" stroke-width="1" />
<line x1="232" y1="435.5" x2="1032" y2="435.5" stroke="#4a4a4a" stroke-width="1" />
<line x1="232" y1="478.5" x2="1032" y2="478.5" stroke="#4a4a4a" stroke-width="1" />
<line x1="232" y1="523.5" x2="1032" y2="523.5" stroke="#4a4a4a" stroke-width="1" />
<line x1="232" y1="567.5" x2="1032" y2="567.5" stroke="#4a4a4a" stroke-width="1" />
<line x1="232" y1="654.5" x2="1032" y2="654.5" stroke="#4a4a4a" stroke-width="1" />
<line x1="232" y1="698.5" x2="1032" y2="698.5" stroke="#4a4a4a" stroke-width="1" />
<line x1="263.5" y1="390" x2="263.5" y2="738" stroke="#4a4a4a" stroke-width="1" />
<line x1="405.5" y1="390" x2="405.5" y2="738" stroke="#4a4a4a" stroke-width="1" />
<line x1="547.5" y1="390" x2="547.5" y2="738" stroke="#4a4a4a" stroke-width="1" />
<line x1="689.5" y1="390" x2="689.5" y2="738" stroke="#4a4a4a" stroke-width="1" />
<line x1="831.5" y1="390" x2="831.5" y2="738" stroke="#4a4a4a" stroke-width="1" />
<line x1="972.5" y1="390" x2="972.5" y2="738" stroke="#4a4a4a" stroke-width="1" />
</g>
<g filter="url(#soft)" fill="none" stroke-linecap="round"><linearGradient id="gu0" gradientUnits="userSpaceOnUse" x1="0" y1="458" x2="0" y2="541"><stop offset="0" stop-color="#24380a"/><stop offset="0.35" stop-color="#487812"/><stop offset="1" stop-color="#68a616"/></linearGradient><linearGradient id="gm0" gradientUnits="userSpaceOnUse" x1="0" y1="512" x2="0" y2="671"><stop offset="0" stop-color="#283e0a"/><stop offset="0.3" stop-color="#569012"/><stop offset="0.7" stop-color="#7cc018"/><stop offset="0.93" stop-color="#92d824"/><stop offset="1" stop-color="#568a12"/></linearGradient><path d="M340.8 458 C341.2 490 342 515 343.5 526 C345 535 347 540 347.6 541.3" stroke="url(#gu0)" stroke-width="2.6"/><path d="M338 512 C338.5 560 339 610 340 635 C341 652 344 661 347.6 666 L347 671" stroke="url(#gm0)" stroke-width="3.2"/><path d="M346 663 Q352 664.5 362 666" stroke="#2a4a0a" stroke-width="4" opacity="0.6"/><linearGradient id="gu1" gradientUnits="userSpaceOnUse" x1="0" y1="444.7" x2="0" y2="545.2"><stop offset="0" stop-color="#24380a"/><stop offset="0.35" stop-color="#487812"/><stop offset="1" stop-color="#68a616"/></linearGradient><linearGradient id="gm1" gradientUnits="userSpaceOnUse" x1="0" y1="521" x2="0" y2="675"><stop offset="0" stop-color="#283e0a"/><stop offset="0.3" stop-color="#569012"/><stop offset="0.7" stop-color="#7cc018"/><stop offset="0.93" stop-color="#92d824"/><stop offset="1" stop-color="#568a12"/></linearGradient><path d="M657 444.7 C657.5 480 658.3 510 659.3 522 C661 535 665 541 667.6 545.2" stroke="url(#gu1)" stroke-width="2.6"/><path d="M654.6 521 C655.3 570 656 610 657 635 C658.5 652 662 661 667 666 L665.5 675" stroke="url(#gm1)" stroke-width="3.2"/><path d="M665 663 Q671 664.5 681 666" stroke="#2a4a0a" stroke-width="4" opacity="0.6"/><linearGradient id="gu2" gradientUnits="userSpaceOnUse" x1="0" y1="392" x2="0" y2="544"><stop offset="0" stop-color="#24380a"/><stop offset="0.35" stop-color="#487812"/><stop offset="1" stop-color="#68a616"/></linearGradient><linearGradient id="gm2" gradientUnits="userSpaceOnUse" x1="0" y1="500" x2="0" y2="673"><stop offset="0" stop-color="#283e0a"/><stop offset="0.3" stop-color="#569012"/><stop offset="0.7" stop-color="#7cc018"/><stop offset="0.93" stop-color="#92d824"/><stop offset="1" stop-color="#568a12"/></linearGradient><path d="M925 392 C925.5 430 926 460 927 484 C928.5 515 931 535 933 544" stroke="url(#gu2)" stroke-width="2.6"/><path d="M922.4 500 C923 560 924 610 925 635 C926.5 652 929.5 661 932.5 666.5 L931.5 673" stroke="url(#gm2)" stroke-width="3.2"/><path d="M931 663 Q937 664.5 947 666" stroke="#2a4a0a" stroke-width="4" opacity="0.6"/></g>
<g shape-rendering="crispEdges">
<line x1="232.5" y1="390" x2="232.5" y2="738" stroke="#ffffff" stroke-width="1" />
<line x1="232" y1="734.5" x2="236" y2="734.5" stroke="#ffffff" stroke-width="1" />
<line x1="232" y1="725.5" x2="236" y2="725.5" stroke="#ffffff" stroke-width="1" />
<line x1="232" y1="716.5" x2="236" y2="716.5" stroke="#ffffff" stroke-width="1" />
<line x1="232" y1="707.5" x2="236" y2="707.5" stroke="#ffffff" stroke-width="1" />
<line x1="232" y1="698.5" x2="240" y2="698.5" stroke="#e0e0e0" stroke-width="1" />
<line x1="232" y1="690.5" x2="236" y2="690.5" stroke="#ffffff" stroke-width="1" />
<line x1="232" y1="681.5" x2="236" y2="681.5" stroke="#ffffff" stroke-width="1" />
<line x1="232" y1="672.5" x2="236" y2="672.5" stroke="#ffffff" stroke-width="1" />
<line x1="232" y1="663.5" x2="236" y2="663.5" stroke="#ffffff" stroke-width="1" />
<line x1="232" y1="655.5" x2="240" y2="655.5" stroke="#e0e0e0" stroke-width="1" />
<line x1="232" y1="646.5" x2="236" y2="646.5" stroke="#ffffff" stroke-width="1" />
<line x1="232" y1="637.5" x2="236" y2="637.5" stroke="#ffffff" stroke-width="1" />
<line x1="232" y1="628.5" x2="236" y2="628.5" stroke="#ffffff" stroke-width="1" />
<line x1="232" y1="619.5" x2="236" y2="619.5" stroke="#ffffff" stroke-width="1" />
<line x1="232" y1="611.5" x2="240" y2="611.5" stroke="#e0e0e0" stroke-width="1" />
<line x1="232" y1="602.5" x2="236" y2="602.5" stroke="#ffffff" stroke-width="1" />
<line x1="232" y1="593.5" x2="236" y2="593.5" stroke="#ffffff" stroke-width="1" />
<line x1="232" y1="584.5" x2="236" y2="584.5" stroke="#ffffff" stroke-width="1" />
<line x1="232" y1="576.5" x2="236" y2="576.5" stroke="#ffffff" stroke-width="1" />
<line x1="232" y1="567.5" x2="240" y2="567.5" stroke="#e0e0e0" stroke-width="1" />
<line x1="232" y1="558.5" x2="236" y2="558.5" stroke="#ffffff" stroke-width="1" />
<line x1="232" y1="549.5" x2="236" y2="549.5" stroke="#ffffff" stroke-width="1" />
<line x1="232" y1="540.5" x2="236" y2="540.5" stroke="#ffffff" stroke-width="1" />
<line x1="232" y1="532.5" x2="236" y2="532.5" stroke="#ffffff" stroke-width="1" />
<line x1="232" y1="523.5" x2="240" y2="523.5" stroke="#e0e0e0" stroke-width="1" />
<line x1="232" y1="514.5" x2="236" y2="514.5" stroke="#ffffff" stroke-width="1" />
<line x1="232" y1="505.5" x2="236" y2="505.5" stroke="#ffffff" stroke-width="1" />
<line x1="232" y1="497.5" x2="236" y2="497.5" stroke="#ffffff" stroke-width="1" />
<line x1="232" y1="488.5" x2="236" y2="488.5" stroke="#ffffff" stroke-width="1" />
<line x1="232" y1="479.5" x2="240" y2="479.5" stroke="#e0e0e0" stroke-width="1" />
<line x1="232" y1="470.5" x2="236" y2="470.5" stroke="#ffffff" stroke-width="1" />
<line x1="232" y1="461.5" x2="236" y2="461.5" stroke="#ffffff" stroke-width="1" />
<line x1="232" y1="453.5" x2="236" y2="453.5" stroke="#ffffff" stroke-width="1" />
<line x1="232" y1="444.5" x2="236" y2="444.5" stroke="#ffffff" stroke-width="1" />
<line x1="232" y1="435.5" x2="240" y2="435.5" stroke="#e0e0e0" stroke-width="1" />
<line x1="232" y1="426.5" x2="236" y2="426.5" stroke="#ffffff" stroke-width="1" />
<line x1="232" y1="418.5" x2="236" y2="418.5" stroke="#ffffff" stroke-width="1" />
<line x1="232" y1="409.5" x2="236" y2="409.5" stroke="#ffffff" stroke-width="1" />
<line x1="232" y1="400.5" x2="236" y2="400.5" stroke="#ffffff" stroke-width="1" />
<line x1="232" y1="391.5" x2="240" y2="391.5" stroke="#e0e0e0" stroke-width="1" />
</g>
<clipPath id="spc"><rect x="232" y="390" width="800" height="348"/></clipPath><g clip-path="url(#spc)">
<text x="245" y="703.0" font-size="11" fill="#e4e4e4" text-anchor="start" >20</text>
<text x="245" y="659.0999999999999" font-size="11" fill="#e4e4e4" text-anchor="start" >30</text>
<text x="245" y="615.1999999999999" font-size="11" fill="#e4e4e4" text-anchor="start" >40</text>
<text x="245" y="571.3" font-size="11" fill="#e4e4e4" text-anchor="start" >50</text>
<text x="245" y="527.4" font-size="11" fill="#e4e4e4" text-anchor="start" >60</text>
<text x="245" y="483.5" font-size="11" fill="#e4e4e4" text-anchor="start" >70</text>
<text x="245" y="439.59999999999997" font-size="11" fill="#e4e4e4" text-anchor="start" >80</text>
<text x="245" y="395.7" font-size="11" fill="#e4e4e4" text-anchor="start" >90</text>
</g>
<line x1="232" y1="611" x2="1032" y2="611" stroke="#000" stroke-width="2"/>
<line x1="232" y1="611" x2="1032" y2="611" stroke="#cccccc" stroke-width="1.5" stroke-dasharray="4.5 1.7"/>
<text x="1028" y="625.5" font-size="11" fill="#e8e8e8" text-anchor="end" >40,0 kHz</text>
<rect x="654.5" y="522.5" width="15" height="146" fill="none" stroke="#f02828" stroke-width="2" stroke-dasharray="6 3"/>
<text x="648.5" y="502" font-size="10.5" fill="#ec2424" text-anchor="end" >5,176 s</text>
<text x="648.5" y="515" font-size="10.5" fill="#ec2424" text-anchor="end" >60,161 kHz</text>
<text x="675" y="601.5" font-size="10.5" fill="#ec2424" text-anchor="start" >33,655 kHz</text>
<text x="648" y="687" font-size="10.5" fill="#ec2424" text-anchor="start" >11 ms5,187 s</text>
<text x="675" y="700" font-size="10.5" fill="#ec2424" text-anchor="start" >26,506 kHz</text>
<g shape-rendering="crispEdges">
<line x1="232" y1="742.5" x2="1032" y2="742.5" stroke="#000" stroke-width="1" />
<line x1="235.5" y1="742" x2="235.5" y2="747" stroke="#000" stroke-width="1" />
<line x1="263.5" y1="742" x2="263.5" y2="750" stroke="#000" stroke-width="1" />
<line x1="292.5" y1="742" x2="292.5" y2="747" stroke="#000" stroke-width="1" />
<line x1="320.5" y1="742" x2="320.5" y2="747" stroke="#000" stroke-width="1" />
<line x1="348.5" y1="742" x2="348.5" y2="747" stroke="#000" stroke-width="1" />
<line x1="377.5" y1="742" x2="377.5" y2="747" stroke="#000" stroke-width="1" />
<line x1="405.5" y1="742" x2="405.5" y2="750" stroke="#000" stroke-width="1" />
<line x1="433.5" y1="742" x2="433.5" y2="747" stroke="#000" stroke-width="1" />
<line x1="462.5" y1="742" x2="462.5" y2="747" stroke="#000" stroke-width="1" />
<line x1="490.5" y1="742" x2="490.5" y2="747" stroke="#000" stroke-width="1" />
<line x1="519.5" y1="742" x2="519.5" y2="747" stroke="#000" stroke-width="1" />
<line x1="547.5" y1="742" x2="547.5" y2="750" stroke="#000" stroke-width="1" />
<line x1="575.5" y1="742" x2="575.5" y2="747" stroke="#000" stroke-width="1" />
<line x1="604.5" y1="742" x2="604.5" y2="747" stroke="#000" stroke-width="1" />
<line x1="632.5" y1="742" x2="632.5" y2="747" stroke="#000" stroke-width="1" />
<line x1="660.5" y1="742" x2="660.5" y2="747" stroke="#000" stroke-width="1" />
<line x1="689.5" y1="742" x2="689.5" y2="750" stroke="#000" stroke-width="1" />
<line x1="717.5" y1="742" x2="717.5" y2="747" stroke="#000" stroke-width="1" />
<line x1="745.5" y1="742" x2="745.5" y2="747" stroke="#000" stroke-width="1" />
<line x1="774.5" y1="742" x2="774.5" y2="747" stroke="#000" stroke-width="1" />
<line x1="802.5" y1="742" x2="802.5" y2="747" stroke="#000" stroke-width="1" />
<line x1="830.5" y1="742" x2="830.5" y2="750" stroke="#000" stroke-width="1" />
<line x1="859.5" y1="742" x2="859.5" y2="747" stroke="#000" stroke-width="1" />
<line x1="887.5" y1="742" x2="887.5" y2="747" stroke="#000" stroke-width="1" />
<line x1="916.5" y1="742" x2="916.5" y2="747" stroke="#000" stroke-width="1" />
<line x1="944.5" y1="742" x2="944.5" y2="747" stroke="#000" stroke-width="1" />
<line x1="972.5" y1="742" x2="972.5" y2="750" stroke="#000" stroke-width="1" />
<line x1="1001.5" y1="742" x2="1001.5" y2="747" stroke="#000" stroke-width="1" />
<line x1="1029.5" y1="742" x2="1029.5" y2="747" stroke="#000" stroke-width="1" />
</g>
<text x="263.3" y="764.5" font-size="11" fill="#000" stroke="#000" stroke-width="0.15" text-anchor="middle" >4,9</text>
<text x="405.0999999999995" y="764.5" font-size="11" fill="#000" stroke="#000" stroke-width="0.15" text-anchor="middle" >5</text>
<text x="546.9000000000003" y="764.5" font-size="11" fill="#000" stroke="#000" stroke-width="0.15" text-anchor="middle" >5,1</text>
<text x="688.6999999999998" y="764.5" font-size="11" fill="#000" stroke="#000" stroke-width="0.15" text-anchor="middle" >5,2</text>
<text x="830.5000000000005" y="764.5" font-size="11" fill="#000" stroke="#000" stroke-width="0.15" text-anchor="middle" >5,3</text>
<text x="972.3" y="764.5" font-size="11" fill="#000" stroke="#000" stroke-width="0.15" text-anchor="middle" >5,4</text>
<text x="630.5" y="779" font-size="11" fill="#000" stroke="#000" stroke-width="0.15" text-anchor="middle" >Time in s</text>
<text transform="translate(223.5,564) rotate(-90)" font-size="11" stroke="#000" stroke-width="0.15" text-anchor="middle">Frequency in kHz</text>
<linearGradient id="cb" x1="0" y1="0" x2="0" y2="1"><stop offset="0" stop-color="#7aba00"/><stop offset="0.5" stop-color="#3d5e00"/><stop offset="1" stop-color="#000"/></linearGradient>
<rect x="1037" y="390" width="16" height="347.5" fill="url(#cb)" />
<g shape-rendering="crispEdges">
<line x1="1055.5" y1="390" x2="1055.5" y2="737.5" stroke="#000" stroke-width="1.5" />
<line x1="1055" y1="391.5" x2="1059" y2="391.5" stroke="#000" stroke-width="1" />
<line x1="1055" y1="403.5" x2="1059" y2="403.5" stroke="#000" stroke-width="1" />
<line x1="1055" y1="415.5" x2="1059" y2="415.5" stroke="#000" stroke-width="1" />
<line x1="1055" y1="428.5" x2="1063" y2="428.5" stroke="#000" stroke-width="1" />
<line x1="1055" y1="440.5" x2="1059" y2="440.5" stroke="#000" stroke-width="1" />
<line x1="1055" y1="453.5" x2="1059" y2="453.5" stroke="#000" stroke-width="1" />
<line x1="1055" y1="465.5" x2="1059" y2="465.5" stroke="#000" stroke-width="1" />
<line x1="1055" y1="477.5" x2="1059" y2="477.5" stroke="#000" stroke-width="1" />
<line x1="1055" y1="490.5" x2="1063" y2="490.5" stroke="#000" stroke-width="1" />
<line x1="1055" y1="502.5" x2="1059" y2="502.5" stroke="#000" stroke-width="1" />
<line x1="1055" y1="514.5" x2="1059" y2="514.5" stroke="#000" stroke-width="1" />
<line x1="1055" y1="527.5" x2="1059" y2="527.5" stroke="#000" stroke-width="1" />
<line x1="1055" y1="539.5" x2="1059" y2="539.5" stroke="#000" stroke-width="1" />
<line x1="1055" y1="551.5" x2="1063" y2="551.5" stroke="#000" stroke-width="1" />
<line x1="1055" y1="564.5" x2="1059" y2="564.5" stroke="#000" stroke-width="1" />
<line x1="1055" y1="576.5" x2="1059" y2="576.5" stroke="#000" stroke-width="1" />
<line x1="1055" y1="588.5" x2="1059" y2="588.5" stroke="#000" stroke-width="1" />
<line x1="1055" y1="601.5" x2="1059" y2="601.5" stroke="#000" stroke-width="1" />
<line x1="1055" y1="613.5" x2="1063" y2="613.5" stroke="#000" stroke-width="1" />
<line x1="1055" y1="626.5" x2="1059" y2="626.5" stroke="#000" stroke-width="1" />
<line x1="1055" y1="638.5" x2="1059" y2="638.5" stroke="#000" stroke-width="1" />
<line x1="1055" y1="650.5" x2="1059" y2="650.5" stroke="#000" stroke-width="1" />
<line x1="1055" y1="663.5" x2="1059" y2="663.5" stroke="#000" stroke-width="1" />
<line x1="1055" y1="675.5" x2="1063" y2="675.5" stroke="#000" stroke-width="1" />
<line x1="1055" y1="687.5" x2="1059" y2="687.5" stroke="#000" stroke-width="1" />
<line x1="1055" y1="700.5" x2="1059" y2="700.5" stroke="#000" stroke-width="1" />
<line x1="1055" y1="712.5" x2="1059" y2="712.5" stroke="#000" stroke-width="1" />
<line x1="1055" y1="724.5" x2="1059" y2="724.5" stroke="#000" stroke-width="1" />
<line x1="1055" y1="737.5" x2="1063" y2="737.5" stroke="#000" stroke-width="1" />
</g>
<text x="1068" y="431.8" font-size="11" fill="#000" stroke="#000" stroke-width="0.15" text-anchor="start" >-50</text>
<text x="1068" y="493.6" font-size="11" fill="#000" stroke="#000" stroke-width="0.15" text-anchor="start" >-60</text>
<text x="1068" y="555.4" font-size="11" fill="#000" stroke="#000" stroke-width="0.15" text-anchor="start" >-70</text>
<text x="1068" y="617.2" font-size="11" fill="#000" stroke="#000" stroke-width="0.15" text-anchor="start" >-80</text>
<text x="1068" y="679.0" font-size="11" fill="#000" stroke="#000" stroke-width="0.15" text-anchor="start" >-90</text>
<text x="1068" y="740.8" font-size="11" fill="#000" stroke="#000" stroke-width="0.15" text-anchor="start" >-100</text>
<text transform="translate(1097,565) rotate(90)" font-size="11" stroke="#000" stroke-width="0.15" text-anchor="middle">Amplitude in dBFS</text>
<rect x="76" y="388" width="133" height="352" fill="#000" />
<rect x="78" y="390" width="129" height="348" fill="#787878" />
<rect x="78" y="528" width="129" height="182" fill="#000" />
<g shape-rendering="crispEdges">
<line x1="78" y1="736.5" x2="207" y2="736.5" stroke="#8e8e8e" stroke-width="1" />
<line x1="78" y1="690.5" x2="207" y2="690.5" stroke="#3c3c3c" stroke-width="1" />
<line x1="78" y1="644.5" x2="207" y2="644.5" stroke="#3c3c3c" stroke-width="1" />
<line x1="78" y1="598.5" x2="207" y2="598.5" stroke="#3c3c3c" stroke-width="1" />
<line x1="78" y1="551.5" x2="207" y2="551.5" stroke="#3c3c3c" stroke-width="1" />
<line x1="78" y1="505.5" x2="207" y2="505.5" stroke="#8e8e8e" stroke-width="1" />
<line x1="78" y1="459.5" x2="207" y2="459.5" stroke="#8e8e8e" stroke-width="1" />
<line x1="78" y1="413.5" x2="207" y2="413.5" stroke="#8e8e8e" stroke-width="1" />
<line x1="100.5" y1="390" x2="100.5" y2="528" stroke="#8e8e8e" stroke-width="1" />
<line x1="100.5" y1="528" x2="100.5" y2="710" stroke="#3c3c3c" stroke-width="1" />
<line x1="100.5" y1="710" x2="100.5" y2="738" stroke="#8e8e8e" stroke-width="1" />
<line x1="138.5" y1="390" x2="138.5" y2="528" stroke="#8e8e8e" stroke-width="1" />
<line x1="138.5" y1="528" x2="138.5" y2="710" stroke="#3c3c3c" stroke-width="1" />
<line x1="138.5" y1="710" x2="138.5" y2="738" stroke="#8e8e8e" stroke-width="1" />
<line x1="176.5" y1="390" x2="176.5" y2="528" stroke="#8e8e8e" stroke-width="1" />
<line x1="176.5" y1="528" x2="176.5" y2="710" stroke="#3c3c3c" stroke-width="1" />
<line x1="176.5" y1="710" x2="176.5" y2="738" stroke="#8e8e8e" stroke-width="1" />
</g>
<path d="M136.2 390.5H176.4M143.1 391.5H165.5M138.8 392.5H178.2M140.5 393.5H165.5M136.5 394.5H164.4M143.3 395.5H163.1M142.3 396.5H195.6M146.5 397.5H165.6M146.8 398.5H171.8M146.4 399.5H166.5M145.1 400.5H161.0M146.8 401.5H171.4M140.8 402.5H167.7M143.7 403.5H172.3M141.4 404.5H166.1M145.6 405.5H163.0M143.1 406.5H169.8M146.1 407.5H160.4M139.8 408.5H161.1M134.4 409.5H169.5M142.0 410.5H164.3M140.2 411.5H163.6M131.5 412.5H170.2M143.1 413.5H161.8M138.9 414.5H168.8M129.1 415.5H174.1M139.8 416.5H175.0M137.4 417.5H164.5M141.3 418.5H160.4M145.4 419.5H166.6M143.4 420.5H180.5M141.6 421.5H189.0M147.1 422.5H192.7M136.5 423.5H203.8M143.0 424.5H197.1M137.9 425.5H185.1M144.4 426.5H175.1M145.0 427.5H171.3M142.3 428.5H192.4M135.5 429.5H182.1M146.6 430.5H198.9M132.1 431.5H160.4M138.4 432.5H165.0M136.6 433.5H161.8M144.0 434.5H199.0M145.1 435.5H171.1M146.2 436.5H165.7M142.8 437.5H160.3M144.7 438.5H177.5M147.0 439.5H195.3M141.7 440.5H174.4M134.3 441.5H162.0M147.3 442.5H170.9M139.0 443.5H185.3M140.6 444.5H169.5M143.5 445.5H172.4M136.1 446.5H166.7M140.2 447.5H192.5M145.6 448.5H165.5M145.0 449.5H161.4M141.2 450.5H166.7M137.8 451.5H174.6M140.5 452.5H173.7M142.3 453.5H187.5M147.6 454.5H165.3M142.8 455.5H165.9M136.1 456.5H180.5M144.3 457.5H168.1M138.1 458.5H185.2M133.9 459.5H186.0M140.2 460.5H168.1M144.3 461.5H160.7M139.7 462.5H164.8M146.5 463.5H183.7M146.6 464.5H170.8M147.6 465.5H170.6M146.5 466.5H186.6M140.6 467.5H162.9M143.5 468.5H174.4M143.4 469.5H166.4M141.5 470.5H190.4M140.2 471.5H162.8M146.0 472.5H166.1M139.6 473.5H167.8M147.1 474.5H203.2M144.7 475.5H202.7M145.6 476.5H185.2M144.3 477.5H164.0M144.5 478.5H166.6M138.8 479.5H171.3M147.0 480.5H174.3M145.6 481.5H201.7M137.2 482.5H160.5M139.9 483.5H162.7M141.8 484.5H168.6M138.2 485.5H181.8M143.6 486.5H165.2M141.0 487.5H164.9M135.2 488.5H192.8M139.5 489.5H206.0M145.8 490.5H160.3M138.4 491.5H167.3M140.3 492.5H172.9M143.0 493.5H164.6M144.9 494.5H179.0M136.4 495.5H168.1M139.7 496.5H181.8M146.2 497.5H164.9M139.2 498.5H169.3M139.7 499.5H188.9M145.9 500.5H176.1M142.0 501.5H168.7M146.5 502.5H162.0M142.6 503.5H172.5M139.9 504.5H166.7M143.1 505.5H162.3M139.7 506.5H165.4M146.5 507.5H164.2M143.9 508.5H171.2M147.0 509.5H173.2M147.4 510.5H164.0M143.8 511.5H196.8M134.2 512.5H171.0M147.7 513.5H162.7M142.5 514.5H196.7M140.7 515.5H175.3M146.8 516.5H166.1M136.9 517.5H173.3M141.3 518.5H181.3M142.0 519.5H169.3M139.5 520.5H177.6M142.9 521.5H171.4M146.9 522.5H163.8M143.1 523.5H166.8M144.6 524.5H198.1M143.8 525.5H195.3M141.1 526.5H170.0M142.7 527.5H164.4M144.9 710.5H195.9M149.0 711.5H177.1M137.8 712.5H169.6M145.4 713.5H195.3M144.1 714.5H169.0M141.3 715.5H169.7M149.2 716.5H170.4M143.2 717.5H182.3M148.3 718.5H184.6M150.9 719.5H184.5M150.9 720.5H173.9M146.8 721.5H197.4M146.2 722.5H178.7M143.3 723.5H165.0M147.6 724.5H174.6M138.4 725.5H199.6M137.0 726.5H175.8M151.5 727.5H189.8M146.1 728.5H177.3M149.8 729.5H206.0M143.4 730.5H197.1M150.4 731.5H174.3M151.3 732.5H171.6M148.9 733.5H165.4M142.9 734.5H190.4M146.1 735.5H193.9M149.6 736.5H195.9M146.1 737.5H171.0" stroke="#b3db7a" stroke-width="1" fill="none" shape-rendering="crispEdges"/>
<path d="M141.8 528.5H177.1M146.3 529.5H174.8M142.9 530.5H169.0M144.5 531.5H184.5M143.0 532.5H178.0M147.2 533.5H177.7M138.8 534.5H168.2M140.4 535.5H165.2M143.9 536.5H167.3M147.6 537.5H176.8M146.4 538.5H164.0M146.3 539.5H172.4M146.4 540.5H161.8M142.7 541.5H175.0M147.5 542.5H169.4M142.3 543.5H200.8M146.2 544.5H187.6M144.3 545.5H201.3M139.7 546.5H171.9M141.6 547.5H163.1M146.9 548.5H176.3M138.7 549.5H164.6M144.8 550.5H185.0M146.0 551.5H166.4M142.7 552.5H180.0M144.2 553.5H186.2M145.5 554.5H165.7M134.2 555.5H195.8M142.7 556.5H168.8M137.8 557.5H164.5M142.1 558.5H165.7M143.9 559.5H166.8M146.9 560.5H169.4M144.6 561.5H171.1M128.6 562.5H185.3M137.0 563.5H167.7M146.9 564.5H160.4M137.7 565.5H182.6M146.7 566.5H161.7M146.5 567.5H165.4M144.3 568.5H162.4M147.4 569.5H167.8M145.2 570.5H194.7M147.6 571.5H162.6M143.6 572.5H172.3M140.5 573.5H179.4M139.5 574.5H198.0M146.2 575.5H185.0M135.9 576.5H160.4M143.2 577.5H163.3M142.8 578.5H163.8M141.6 579.5H191.1M142.4 580.5H173.8M131.8 581.5H165.8M132.2 582.5H163.7M139.1 583.5H183.5M141.0 584.5H174.2M146.6 585.5H161.5M145.2 586.5H180.2M141.2 587.5H169.2M142.2 588.5H204.6M147.6 589.5H179.9M143.5 590.5H178.9M145.5 591.5H176.3M142.6 592.5H168.4M133.6 593.5H204.5M144.8 594.5H163.4M147.2 595.5H172.5M146.9 596.5H171.0M146.0 597.5H168.9M142.2 598.5H168.1M142.7 599.5H172.5M140.7 600.5H174.7M134.9 601.5H182.4M146.7 602.5H164.1M147.6 603.5H165.8M144.4 604.5H162.2M144.6 605.5H170.2M145.2 606.5H163.4M143.5 607.5H185.8M143.5 608.5H168.4M143.9 609.5H161.3M142.2 610.5H166.2M137.9 611.5H181.7M144.9 612.5H183.5M143.3 613.5H179.1M139.6 614.5H175.5M142.0 615.5H169.2M142.9 616.5H160.1M126.1 617.5H167.3M140.3 618.5H170.8M144.4 619.5H165.4M139.1 620.5H165.0M147.2 621.5H188.3M145.9 622.5H194.0M141.9 623.5H172.4M147.2 624.5H160.9M140.2 625.5H166.0M146.0 626.5H167.1M142.5 627.5H163.1M144.3 628.5H162.7M141.1 629.5H171.8M141.2 630.5H172.6M144.0 631.5H160.9M146.3 632.5H168.5M141.2 633.5H168.8M133.6 634.5H161.5M143.9 635.5H162.1M138.8 636.5H176.7M144.2 637.5H169.1M142.3 638.5H178.8M139.0 639.5H178.8M127.9 640.5H162.0M140.8 641.5H174.4M137.7 642.5H161.6M134.8 643.5H157.9M128.7 644.5H182.8M134.4 645.5H153.0M124.3 646.5H159.3M127.8 647.5H165.9M133.6 648.5H178.2M124.9 649.5H187.4M124.9 650.5H155.6M124.4 651.5H159.8M130.0 652.5H177.1M126.5 653.5H149.5M120.9 654.5H161.0M114.8 655.5H156.2M115.5 656.5H159.3M122.4 657.5H148.6M123.4 658.5H157.0M122.7 659.5H144.5M120.9 660.5H174.3M120.6 661.5H174.7M115.2 662.5H152.3M113.2 663.5H141.5M114.4 664.5H139.6M113.6 665.5H164.9M115.4 666.5H138.2M108.5 667.5H148.0M102.0 668.5H171.8M111.0 669.5H163.9M115.8 670.5H156.4M105.3 671.5H142.4M118.3 672.5H168.6M121.6 673.5H173.2M129.7 674.5H153.3M124.3 675.5H147.9M140.5 676.5H187.4M136.7 677.5H160.6M146.4 678.5H162.0M146.4 679.5H167.5M140.8 680.5H172.3M142.4 681.5H164.7M141.0 682.5H163.2M142.2 683.5H170.6M147.2 684.5H169.0M144.2 685.5H170.8M146.8 686.5H167.7M140.4 687.5H180.6M145.4 688.5H186.1M141.2 689.5H191.3M145.5 690.5H167.6M144.1 691.5H162.7M141.4 692.5H193.9M142.2 693.5H167.4M147.6 694.5H162.1M136.3 695.5H164.0M142.6 696.5H166.0M143.5 697.5H172.9M144.4 698.5H170.0M139.8 699.5H167.1M143.6 700.5H171.2M145.6 701.5H179.4M136.4 702.5H171.2M147.0 703.5H168.8M145.9 704.5H166.2M139.5 705.5H160.7M143.8 706.5H177.9M141.9 707.5H162.0M142.6 708.5H194.2M145.8 709.5H161.1" stroke="#7cbc06" stroke-width="1" fill="none" shape-rendering="crispEdges"/>
<line x1="79" y1="735.5" x2="140" y2="735.5" stroke="#7cbc06" stroke-width="1"/>
<g shape-rendering="crispEdges">
<line x1="206.5" y1="390" x2="206.5" y2="738" stroke="#ffffff" stroke-width="1" />
<line x1="198" y1="736.5" x2="207" y2="736.5" stroke="#e0e0e0" stroke-width="1" />
<line x1="203" y1="724.5" x2="207" y2="724.5" stroke="#ffffff" stroke-width="1" />
<line x1="201" y1="713.5" x2="207" y2="713.5" stroke="#e8e8e8" stroke-width="1" />
<line x1="203" y1="701.5" x2="207" y2="701.5" stroke="#ffffff" stroke-width="1" />
<line x1="198" y1="690.5" x2="207" y2="690.5" stroke="#e0e0e0" stroke-width="1" />
<line x1="203" y1="678.5" x2="207" y2="678.5" stroke="#ffffff" stroke-width="1" />
<line x1="201" y1="667.5" x2="207" y2="667.5" stroke="#e8e8e8" stroke-width="1" />
<line x1="203" y1="655.5" x2="207" y2="655.5" stroke="#ffffff" stroke-width="1" />
<line x1="198" y1="644.5" x2="207" y2="644.5" stroke="#e0e0e0" stroke-width="1" />
<line x1="203" y1="632.5" x2="207" y2="632.5" stroke="#ffffff" stroke-width="1" />
<line x1="201" y1="621.5" x2="207" y2="621.5" stroke="#e8e8e8" stroke-width="1" />
<line x1="203" y1="609.5" x2="207" y2="609.5" stroke="#ffffff" stroke-width="1" />
<line x1="198" y1="598.5" x2="207" y2="598.5" stroke="#e0e0e0" stroke-width="1" />
<line x1="203" y1="586.5" x2="207" y2="586.5" stroke="#ffffff" stroke-width="1" />
<line x1="201" y1="574.5" x2="207" y2="574.5" stroke="#e8e8e8" stroke-width="1" />
<line x1="203" y1="563.5" x2="207" y2="563.5" stroke="#ffffff" stroke-width="1" />
<line x1="198" y1="551.5" x2="207" y2="551.5" stroke="#e0e0e0" stroke-width="1" />
<line x1="203" y1="540.5" x2="207" y2="540.5" stroke="#ffffff" stroke-width="1" />
<line x1="201" y1="528.5" x2="207" y2="528.5" stroke="#e8e8e8" stroke-width="1" />
<line x1="203" y1="517.5" x2="207" y2="517.5" stroke="#ffffff" stroke-width="1" />
<line x1="198" y1="505.5" x2="207" y2="505.5" stroke="#e0e0e0" stroke-width="1" />
<line x1="203" y1="494.5" x2="207" y2="494.5" stroke="#ffffff" stroke-width="1" />
<line x1="201" y1="482.5" x2="207" y2="482.5" stroke="#e8e8e8" stroke-width="1" />
<line x1="203" y1="471.5" x2="207" y2="471.5" stroke="#ffffff" stroke-width="1" />
<line x1="198" y1="459.5" x2="207" y2="459.5" stroke="#e0e0e0" stroke-width="1" />
<line x1="203" y1="448.5" x2="207" y2="448.5" stroke="#ffffff" stroke-width="1" />
<line x1="201" y1="436.5" x2="207" y2="436.5" stroke="#e8e8e8" stroke-width="1" />
<line x1="203" y1="425.5" x2="207" y2="425.5" stroke="#ffffff" stroke-width="1" />
<line x1="198" y1="413.5" x2="207" y2="413.5" stroke="#e0e0e0" stroke-width="1" />
<line x1="203" y1="402.5" x2="207" y2="402.5" stroke="#ffffff" stroke-width="1" />
<line x1="201" y1="390.5" x2="207" y2="390.5" stroke="#e8e8e8" stroke-width="1" />
</g>
<text x="192" y="740.0999999999999" font-size="11" fill="#e8e8e8" text-anchor="end" >0</text>
<text x="192" y="693.9999999999999" font-size="11" fill="#e8e8e8" text-anchor="end" >20</text>
<text x="192" y="647.8999999999999" font-size="11" fill="#e8e8e8" text-anchor="end" >40</text>
<text x="192" y="601.8" font-size="11" fill="#e8e8e8" text-anchor="end" >60</text>
<text x="192" y="555.6999999999999" font-size="11" fill="#e8e8e8" text-anchor="end" >80</text>
<text x="192" y="509.59999999999997" font-size="11" fill="#e8e8e8" text-anchor="end" >100</text>
<text x="192" y="463.49999999999994" font-size="11" fill="#e8e8e8" text-anchor="end" >120</text>
<text x="192" y="417.3999999999999" font-size="11" fill="#e8e8e8" text-anchor="end" >140</text>
<g shape-rendering="crispEdges">
<line x1="80.5" y1="742.5" x2="206" y2="742.5" stroke="#000" stroke-width="1" />
<line x1="81.5" y1="742" x2="81.5" y2="747" stroke="#000" stroke-width="1" />
<line x1="90.5" y1="742" x2="90.5" y2="747" stroke="#000" stroke-width="1" />
<line x1="100.5" y1="742" x2="100.5" y2="750" stroke="#000" stroke-width="1" />
<line x1="109.5" y1="742" x2="109.5" y2="747" stroke="#000" stroke-width="1" />
<line x1="119.5" y1="742" x2="119.5" y2="747" stroke="#000" stroke-width="1" />
<line x1="129.5" y1="742" x2="129.5" y2="747" stroke="#000" stroke-width="1" />
<line x1="138.5" y1="742" x2="138.5" y2="750" stroke="#000" stroke-width="1" />
<line x1="148.5" y1="742" x2="148.5" y2="747" stroke="#000" stroke-width="1" />
<line x1="157.5" y1="742" x2="157.5" y2="747" stroke="#000" stroke-width="1" />
<line x1="167.5" y1="742" x2="167.5" y2="747" stroke="#000" stroke-width="1" />
<line x1="176.5" y1="742" x2="176.5" y2="750" stroke="#000" stroke-width="1" />
<line x1="186.5" y1="742" x2="186.5" y2="747" stroke="#000" stroke-width="1" />
<line x1="196.5" y1="742" x2="196.5" y2="747" stroke="#000" stroke-width="1" />
<line x1="205.5" y1="742" x2="205.5" y2="747" stroke="#000" stroke-width="1" />
</g>
<text x="98.6" y="764.5" font-size="11" fill="#000" stroke="#000" stroke-width="0.15" text-anchor="middle" >-100</text>
<text x="136.9" y="764.5" font-size="11" fill="#000" stroke="#000" stroke-width="0.15" text-anchor="middle" >-120</text>
<text x="175.2" y="764.5" font-size="11" fill="#000" stroke="#000" stroke-width="0.15" text-anchor="middle" >-140</text>
<text x="140.5" y="779.3" font-size="11" fill="#000" stroke="#000" stroke-width="0.15" text-anchor="middle" textLength="107">Power/Freq. in dB/Hz</text>
<rect x="62.5" y="801.5" width="1058" height="203" fill="none" stroke="#dadada" stroke-width="1" />
<rect x="62.5" y="1014.5" width="1058" height="20" fill="#e6e6e6" stroke="#cdcdcd" stroke-width="1" />
<rect x="75.5" y="814.5" width="301" height="180" fill="#ffffff" stroke="#828790" stroke-width="1" />
<g shape-rendering="crispEdges">
<line x1="231.5" y1="815" x2="231.5" y2="838" stroke="#e5e5e5" stroke-width="1" />
<line x1="273.5" y1="815" x2="273.5" y2="838" stroke="#e5e5e5" stroke-width="1" />
<line x1="325.5" y1="815" x2="325.5" y2="838" stroke="#e5e5e5" stroke-width="1" />
<line x1="356.5" y1="815" x2="356.5" y2="838" stroke="#e5e5e5" stroke-width="1" />
</g>
<text x="80.5" y="831.5" font-size="12" fill="#000" stroke="#000" stroke-width="0.15" text-anchor="start" >class</text>
<text x="236.5" y="831.5" font-size="12" fill="#000" stroke="#000" stroke-width="0.15" text-anchor="start" >count</text>
<clipPath id="shc"><rect x="274" y="815" width="51" height="23"/></clipPath>
<text x="277.5" y="831.5" font-size="12.7" fill="#000" stroke="#000" stroke-width="0.15" text-anchor="start" clip-path="url(#shc)">shortcut</text>
<text x="80" y="856.0" font-size="12" fill="#000" stroke="#000" stroke-width="0.15" text-anchor="start" >Pip</text>
<text x="236.5" y="856.0" font-size="12" fill="#000" stroke="#000" stroke-width="0.15" text-anchor="start" >0</text>
<text x="277" y="856.0" font-size="12" fill="#000" stroke="#000" stroke-width="0.15" text-anchor="start" >&lt;A&gt;</text>
<text x="100" y="880.75" font-size="12" fill="#000" stroke="#000" stroke-width="0.15" text-anchor="start" >Pnat</text>
<text x="236.5" y="880.75" font-size="12" fill="#000" stroke="#000" stroke-width="0.15" text-anchor="start" >9</text>
<text x="277" y="880.75" font-size="12" fill="#000" stroke="#000" stroke-width="0.15" text-anchor="start" >&lt;Q&gt;</text>
<text x="100" y="905.5" font-size="12" fill="#000" stroke="#000" stroke-width="0.15" text-anchor="start" >PpPn</text>
<text x="236.5" y="905.5" font-size="12" fill="#000" stroke="#000" stroke-width="0.15" text-anchor="start" >2</text>
<text x="277" y="905.5" font-size="12" fill="#000" stroke="#000" stroke-width="0.15" text-anchor="start" >&lt;W&gt;</text>
<text x="100" y="930.25" font-size="12" fill="#000" stroke="#000" stroke-width="0.15" text-anchor="start" >Ppip</text>
<text x="236.5" y="930.25" font-size="12" fill="#000" stroke="#000" stroke-width="0.15" text-anchor="start" >2</text>
<text x="277" y="930.25" font-size="12" fill="#000" stroke="#000" stroke-width="0.15" text-anchor="start" >&lt;E&gt;</text>
<text x="100" y="955.0" font-size="12" fill="#000" stroke="#000" stroke-width="0.15" text-anchor="start" >PpPp</text>
<text x="236.5" y="955.0" font-size="12" fill="#000" stroke="#000" stroke-width="0.15" text-anchor="start" >0</text>
<text x="277" y="955.0" font-size="12" fill="#000" stroke="#000" stroke-width="0.15" text-anchor="start" >&lt;R&gt;</text>
<text x="100" y="979.75" font-size="12" fill="#000" stroke="#000" stroke-width="0.15" text-anchor="start" >Ppyg</text>
<text x="236.5" y="979.75" font-size="12" fill="#000" stroke="#000" stroke-width="0.15" text-anchor="start" >0</text>
<text x="277" y="979.75" font-size="12" fill="#000" stroke="#000" stroke-width="0.15" text-anchor="start" >&lt;T&gt;</text>
<clipPath id="clc"><rect x="76" y="815" width="300" height="179"/></clipPath>
<g clip-path="url(#clc)">
<rect x="327.5" y="840.5" width="28" height="21.5" fill="#e1e1e1" stroke="#adadad" stroke-width="1"/>
<path d="M334 851.5 L339.5 848.0 L339.5 850.2 L349 850.2 L349 852.8 L339.5 852.8 L339.5 855.0 Z" fill="#63a800"/>
<rect x="327.5" y="865.2" width="28" height="21.5" fill="#e1e1e1" stroke="#adadad" stroke-width="1"/>
<path d="M334 876.2 L339.5 872.8 L339.5 875.0 L349 875.0 L349 877.5 L339.5 877.5 L339.5 879.8 Z" fill="#63a800"/>
<rect x="327.5" y="890.0" width="28" height="21.5" fill="#e1e1e1" stroke="#adadad" stroke-width="1"/>
<path d="M334 901.0 L339.5 897.5 L339.5 899.7 L349 899.7 L349 902.3 L339.5 902.3 L339.5 904.5 Z" fill="#63a800"/>
<rect x="327.5" y="914.8" width="28" height="21.5" fill="#e1e1e1" stroke="#adadad" stroke-width="1"/>
<path d="M334 925.8 L339.5 922.2 L339.5 924.5 L349 924.5 L349 927.0 L339.5 927.0 L339.5 929.2 Z" fill="#63a800"/>
<rect x="327.5" y="939.5" width="28" height="21.5" fill="#e1e1e1" stroke="#adadad" stroke-width="1"/>
<path d="M334 950.5 L339.5 947.0 L339.5 949.2 L349 949.2 L349 951.8 L339.5 951.8 L339.5 954.0 Z" fill="#63a800"/>
<rect x="327.5" y="964.2" width="28" height="21.5" fill="#e1e1e1" stroke="#adadad" stroke-width="1"/>
<path d="M334 975.2 L339.5 971.8 L339.5 974.0 L349 974.0 L349 976.5 L339.5 976.5 L339.5 978.8 Z" fill="#63a800"/>
<rect x="327.5" y="989.0" width="28" height="21.5" fill="#e1e1e1" stroke="#adadad" stroke-width="1"/>
<path d="M334 1000.0 L339.5 996.5 L339.5 998.7 L349 998.7 L349 1001.3 L339.5 1001.3 L339.5 1003.5 Z" fill="#63a800"/>
</g>
<rect x="359" y="815" width="17" height="179" fill="#f0f0f0" />
<rect x="360" y="832" width="15" height="72" fill="#cdcdcd" />
<path d="M362.5 826.5 L366.5 822.5 L370.5 826.5" fill="none" stroke="#606060" stroke-width="1.2"/>
<path d="M362.5 983.5 L366.5 987.5 L370.5 983.5" fill="none" stroke="#606060" stroke-width="1.2"/>
<rect x="383.5" y="814.5" width="624" height="180" fill="#ffffff" stroke="#828790" stroke-width="1" />
<g shape-rendering="crispEdges">
<line x1="446.5" y1="815" x2="446.5" y2="838" stroke="#e5e5e5" stroke-width="1" />
<line x1="500.5" y1="815" x2="500.5" y2="838" stroke="#e5e5e5" stroke-width="1" />
<line x1="550.5" y1="815" x2="550.5" y2="838" stroke="#e5e5e5" stroke-width="1" />
<line x1="617.5" y1="815" x2="617.5" y2="838" stroke="#e5e5e5" stroke-width="1" />
<line x1="721.5" y1="815" x2="721.5" y2="838" stroke="#e5e5e5" stroke-width="1" />
<line x1="737.5" y1="815" x2="737.5" y2="838" stroke="#e5e5e5" stroke-width="1" />
<line x1="841.5" y1="815" x2="841.5" y2="838" stroke="#e5e5e5" stroke-width="1" />
<line x1="946.5" y1="815" x2="946.5" y2="838" stroke="#e5e5e5" stroke-width="1" />
</g>
<path d="M412.5 819 L415.7 815.8 L418.9 819" fill="none" stroke="#707070" stroke-width="0.9"/>
<text x="388.5" y="831.5" font-size="12" fill="#000" stroke="#000" stroke-width="0.15" text-anchor="start" >name</text>
<text x="450.5" y="831.5" font-size="12" fill="#000" stroke="#000" stroke-width="0.15" text-anchor="start" >date</text>
<text x="505" y="831.5" font-size="12" fill="#000" stroke="#000" stroke-width="0.15" text-anchor="start" >time</text>
<text x="555" y="831.5" font-size="12" fill="#000" stroke="#000" stroke-width="0.15" text-anchor="start" >length in s</text>
<text x="622.5" y="831.5" font-size="12" fill="#000" stroke="#000" stroke-width="0.15" text-anchor="start" >proposal</text>
<text x="743" y="831.5" font-size="12" fill="#000" stroke="#000" stroke-width="0.15" text-anchor="start" >class 1</text>
<text x="846.5" y="831.5" font-size="12" fill="#000" stroke="#000" stroke-width="0.15" text-anchor="start" >class 2</text>
<text x="951" y="831.5" font-size="12" fill="#000" stroke="#000" stroke-width="0.15" text-anchor="start" >class 3</text>
<clipPath id="ftc"><rect x="384" y="838" width="606" height="139"/></clipPath>
<g clip-path="url(#ftc)">
<rect x="384" y="874.2" width="606" height="17.4" fill="#d9d9d9" />
<text x="387.5" y="852.0" font-size="12" fill="#ff4d1c" stroke="#ff4d1c" stroke-width="0.15" text-anchor="start" >File11.wav</text>
<text x="449.5" y="852.0" font-size="12" fill="#ff4d1c" stroke="#ff4d1c" stroke-width="0.15" text-anchor="start" >03/07/18</text>
<text x="503.5" y="852.0" font-size="12" fill="#ff4d1c" stroke="#ff4d1c" stroke-width="0.15" text-anchor="start" textLength="43.5">00:49:00</text>
<text x="598.5" y="852.0" font-size="12" fill="#ff4d1c" stroke="#ff4d1c" stroke-width="0.15" text-anchor="end" >1,556</text>
<text x="622" y="852.0" font-size="12" fill="#ff4d1c" stroke="#ff4d1c" stroke-width="0.15" text-anchor="start" >Pnat</text>
<rect x="722.5" y="841.7" width="12.5" height="12.5" fill="#fff" stroke="#333" stroke-width="1" shape-rendering="crispEdges"/>
<text x="741.5" y="852.0" font-size="12" fill="#ff4d1c" stroke="#ff4d1c" stroke-width="0.15" text-anchor="start" >No Call</text>
<text x="387.5" y="869.75" font-size="12" fill="#ff4d1c" stroke="#ff4d1c" stroke-width="0.15" text-anchor="start" >File12.wav</text>
<text x="449.5" y="869.75" font-size="12" fill="#ff4d1c" stroke="#ff4d1c" stroke-width="0.15" text-anchor="start" >03/07/18</text>
<text x="503.5" y="869.75" font-size="12" fill="#ff4d1c" stroke="#ff4d1c" stroke-width="0.15" text-anchor="start" textLength="43.5">00:49:05</text>
<text x="598.5" y="869.75" font-size="12" fill="#ff4d1c" stroke="#ff4d1c" stroke-width="0.15" text-anchor="end" >8,765</text>
<text x="622" y="869.75" font-size="12" fill="#ff4d1c" stroke="#ff4d1c" stroke-width="0.15" text-anchor="start" >Pnat, PpPn</text>
<rect x="722.5" y="859.5" width="12.5" height="12.5" fill="#fff" stroke="#333" stroke-width="1" shape-rendering="crispEdges"/>
<text x="741.5" y="869.75" font-size="12" fill="#ff4d1c" stroke="#ff4d1c" stroke-width="0.15" text-anchor="start" >No Call</text>
<text x="387.5" y="887.5" font-size="12" fill="#79b51f" stroke="#79b51f" stroke-width="0.15" text-anchor="start" >File13.wav</text>
<text x="449.5" y="887.5" font-size="12" fill="#79b51f" stroke="#79b51f" stroke-width="0.15" text-anchor="start" >03/07/18</text>
<text x="503.5" y="887.5" font-size="12" fill="#79b51f" stroke="#79b51f" stroke-width="0.15" text-anchor="start" textLength="43.5">01:51:10</text>
<text x="598.5" y="887.5" font-size="12" fill="#79b51f" stroke="#79b51f" stroke-width="0.15" text-anchor="end" >8,656</text>
<text x="622" y="887.5" font-size="12" fill="#79b51f" stroke="#79b51f" stroke-width="0.15" text-anchor="start" >Enil, Nycmi</text>
<rect x="722.5" y="877.2" width="12.5" height="12.5" fill="#fff" stroke="#333" stroke-width="1" shape-rendering="crispEdges"/>
<path d="M724.8 883.5 L727.8 886.5 L733 880.2" fill="none" stroke="#333" stroke-width="1.1"/>
<text x="741.5" y="887.5" font-size="12" fill="#79b51f" stroke="#79b51f" stroke-width="0.15" text-anchor="start" >Enil</text>
<text x="846" y="887.5" font-size="12" fill="#79b51f" stroke="#79b51f" stroke-width="0.15" text-anchor="start" >Nycmi</text>
<text x="387.5" y="905.25" font-size="12" fill="#79b51f" stroke="#79b51f" stroke-width="0.15" text-anchor="start" >File14.wav</text>
<text x="449.5" y="905.25" font-size="12" fill="#79b51f" stroke="#79b51f" stroke-width="0.15" text-anchor="start" >03/07/18</text>
<text x="503.5" y="905.25" font-size="12" fill="#79b51f" stroke="#79b51f" stroke-width="0.15" text-anchor="start" textLength="43.5">01:51:21</text>
<text x="598.5" y="905.25" font-size="12" fill="#79b51f" stroke="#79b51f" stroke-width="0.15" text-anchor="end" >6,307</text>
<text x="622" y="905.25" font-size="12" fill="#79b51f" stroke="#79b51f" stroke-width="0.15" text-anchor="start" >Nycmi, Enil</text>
<rect x="722.5" y="895.0" width="12.5" height="12.5" fill="#fff" stroke="#333" stroke-width="1" shape-rendering="crispEdges"/>
<path d="M724.8 901.2 L727.8 904.2 L733 898.0" fill="none" stroke="#333" stroke-width="1.1"/>
<text x="741.5" y="905.25" font-size="12" fill="#79b51f" stroke="#79b51f" stroke-width="0.15" text-anchor="start" >Nycmi</text>
<text x="846" y="905.25" font-size="12" fill="#79b51f" stroke="#79b51f" stroke-width="0.15" text-anchor="start" >Enil</text>
<text x="387.5" y="923.0" font-size="12" fill="#79b51f" stroke="#79b51f" stroke-width="0.15" text-anchor="start" >File15.wav</text>
<text x="449.5" y="923.0" font-size="12" fill="#79b51f" stroke="#79b51f" stroke-width="0.15" text-anchor="start" >03/07/18</text>
<text x="503.5" y="923.0" font-size="12" fill="#79b51f" stroke="#79b51f" stroke-width="0.15" text-anchor="start" textLength="43.5">01:51:31</text>
<text x="598.5" y="923.0" font-size="12" fill="#79b51f" stroke="#79b51f" stroke-width="0.15" text-anchor="end" >2,703</text>
<text x="622" y="923.0" font-size="12" fill="#79b51f" stroke="#79b51f" stroke-width="0.15" text-anchor="start" >Nycmi</text>
<rect x="722.5" y="912.7" width="12.5" height="12.5" fill="#fff" stroke="#333" stroke-width="1" shape-rendering="crispEdges"/>
<path d="M724.8 919.0 L727.8 922.0 L733 915.7" fill="none" stroke="#333" stroke-width="1.1"/>
<text x="741.5" y="923.0" font-size="12" fill="#79b51f" stroke="#79b51f" stroke-width="0.15" text-anchor="start" >Nycmi</text>
<text x="387.5" y="940.75" font-size="12" fill="#ff4d1c" stroke="#ff4d1c" stroke-width="0.15" text-anchor="start" >File16.wav</text>
<text x="449.5" y="940.75" font-size="12" fill="#ff4d1c" stroke="#ff4d1c" stroke-width="0.15" text-anchor="start" >03/07/18</text>
<text x="503.5" y="940.75" font-size="12" fill="#ff4d1c" stroke="#ff4d1c" stroke-width="0.15" text-anchor="start" textLength="43.5">01:51:35</text>
<text x="598.5" y="940.75" font-size="12" fill="#ff4d1c" stroke="#ff4d1c" stroke-width="0.15" text-anchor="end" >4,942</text>
<text x="622" y="940.75" font-size="12" fill="#ff4d1c" stroke="#ff4d1c" stroke-width="0.15" text-anchor="start" >Nycmi, Enil</text>
<rect x="722.5" y="930.5" width="12.5" height="12.5" fill="#fff" stroke="#333" stroke-width="1" shape-rendering="crispEdges"/>
<text x="741.5" y="940.75" font-size="12" fill="#ff4d1c" stroke="#ff4d1c" stroke-width="0.15" text-anchor="start" >No Call</text>
<text x="387.5" y="958.5" font-size="12" fill="#79b51f" stroke="#79b51f" stroke-width="0.15" text-anchor="start" >File17.wav</text>
<text x="449.5" y="958.5" font-size="12" fill="#79b51f" stroke="#79b51f" stroke-width="0.15" text-anchor="start" >03/07/18</text>
<text x="503.5" y="958.5" font-size="12" fill="#79b51f" stroke="#79b51f" stroke-width="0.15" text-anchor="start" textLength="43.5">02:10:55</text>
<text x="598.5" y="958.5" font-size="12" fill="#79b51f" stroke="#79b51f" stroke-width="0.15" text-anchor="end" >2,266</text>
<text x="622" y="958.5" font-size="12" fill="#79b51f" stroke="#79b51f" stroke-width="0.15" text-anchor="start" >Nnoc, Nycmi</text>
<rect x="722.5" y="948.2" width="12.5" height="12.5" fill="#fff" stroke="#333" stroke-width="1" shape-rendering="crispEdges"/>
<path d="M724.8 954.5 L727.8 957.5 L733 951.2" fill="none" stroke="#333" stroke-width="1.1"/>
<text x="741.5" y="958.5" font-size="12" fill="#79b51f" stroke="#79b51f" stroke-width="0.15" text-anchor="start" >Nnoc</text>
<text x="846" y="958.5" font-size="12" fill="#79b51f" stroke="#79b51f" stroke-width="0.15" text-anchor="start" >Nycmi</text>
<text x="387.5" y="976.25" font-size="12" fill="#79b51f" stroke="#79b51f" stroke-width="0.15" text-anchor="start" >File18.wav</text>
<text x="449.5" y="976.25" font-size="12" fill="#79b51f" stroke="#79b51f" stroke-width="0.15" text-anchor="start" >03/07/18</text>
<text x="503.5" y="976.25" font-size="12" fill="#79b51f" stroke="#79b51f" stroke-width="0.15" text-anchor="start" textLength="43.5">02:17:11</text>
<text x="598.5" y="976.25" font-size="12" fill="#79b51f" stroke="#79b51f" stroke-width="0.15" text-anchor="end" >3,522</text>
<text x="622" y="976.25" font-size="12" fill="#79b51f" stroke="#79b51f" stroke-width="0.15" text-anchor="start" >Ppip</text>
<rect x="722.5" y="966.0" width="12.5" height="12.5" fill="#fff" stroke="#333" stroke-width="1" shape-rendering="crispEdges"/>
<path d="M724.8 972.2 L727.8 975.2 L733 969.0" fill="none" stroke="#333" stroke-width="1.1"/>
<text x="741.5" y="976.25" font-size="12" fill="#79b51f" stroke="#79b51f" stroke-width="0.15" text-anchor="start" >Ppip</text>
</g>
<rect x="990" y="815" width="17" height="179" fill="#f0f0f0" />
<rect x="991" y="846" width="15" height="49" fill="#cdcdcd" />
<path d="M994.5 826.5 L998.5 822.5 L1002.5 826.5" fill="none" stroke="#606060" stroke-width="1.2"/>
<path d="M994.5 965 L998.5 969 L1002.5 965" fill="none" stroke="#606060" stroke-width="1.2"/>
<rect x="384" y="977" width="606" height="17" fill="#f0f0f0" />
<rect x="401" y="978" width="272" height="15" fill="#cdcdcd" />
<path d="M395.5 981 L391.5 985 L395.5 989" fill="none" stroke="#606060" stroke-width="1.2"/>
<path d="M978.5 981 L982.5 985 L978.5 989" fill="none" stroke="#606060" stroke-width="1.2"/>
<rect x="1014" y="814" width="6" height="180" fill="#0cb02a" />
<rect x="1027.5" y="865.5" width="49" height="20.5" fill="#e1e1e1" stroke="#bdbdbd" stroke-width="1" />
<rect x="1027.5" y="892.5" width="49" height="21" fill="#e1e1e1" stroke="#bdbdbd" stroke-width="1" />
<path d="M1045.8 878 L1052 872 L1058.2 878 Z" fill="#2a2a2a"/>
<path d="M1045.8 899 L1052 905 L1058.2 899 Z" fill="#2a2a2a"/>
<text x="1026" y="978.8" font-size="12" fill="#000" stroke="#000" stroke-width="0.15" text-anchor="start" textLength="34.5">1 of 18</text>
<text x="1025.5" y="992.2" font-size="12" fill="#000" stroke="#000" stroke-width="0.15" text-anchor="start" textLength="70.5">items selected</text></svg></body></html>
